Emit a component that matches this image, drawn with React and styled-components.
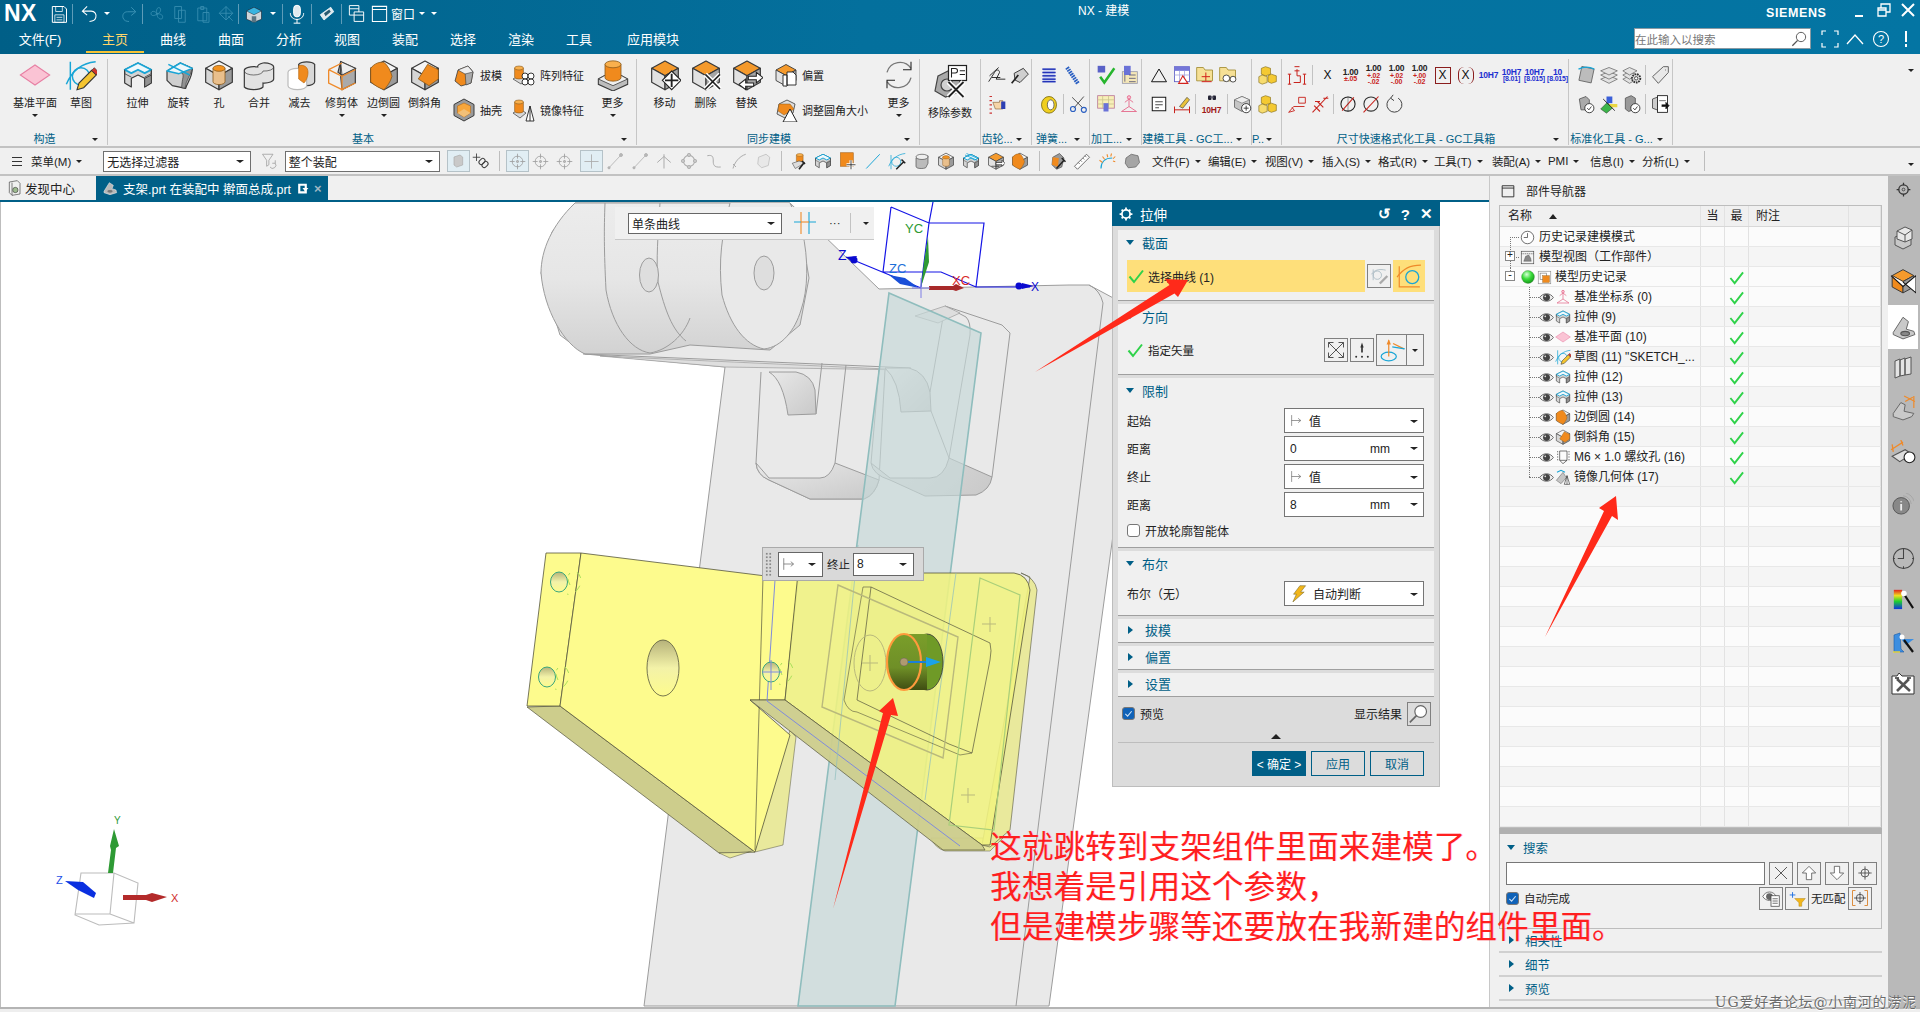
import styled, { createGlobalStyle } from "styled-components";

const FONT = `"Liberation Sans", "Noto Sans CJK SC", sans-serif`;
const BLUE = "#005f87";
const CY = "#19a5d6";
const LN = "#3a3a3a";

const Global = createGlobalStyle`
  html, body { margin: 0; padding: 0; background: #f0f0f0; }
  * { box-sizing: border-box; }
  body { font-family: ${FONT}; font-size: 12px; color: #222; }
`;

// ---------- icons ----------
const Svg = styled.svg`
  display: block;
  flex-shrink: 0;
  opacity: ${(p) => p.$o || 1};
`;

const Cube = ({ t = "#f5f5f5", l = "#d6d6d6", r = "#9b9b9b" }) => (
  <g stroke={LN} strokeWidth=".9" strokeLinejoin="round">
    <path d="M12 1.5 22 7 12 12.5 2 7Z" fill={t} />
    <path d="M2 7 12 12.5V23L2 17.5Z" fill={l} />
    <path d="M22 7 12 12.5V23L22 17.5Z" fill={r} />
  </g>
);
const OCube = () => <Cube t="#f59a2c" l="#e2e2e2" r="#a5a5a5" />;
const Cyl = ({ x = 12, y = 5, rx = 6, ry = 2.5, h = 8, f = "#f08a1d", t = "#f9b04d" }) => (
  <g stroke="#8a5a1c" strokeWidth=".6">
    <path d={`M${x - rx} ${y}V${y + h}A${rx} ${ry} 0 0 0 ${x + rx} ${y + h}V${y}Z`} fill={f} />
    <ellipse cx={x} cy={y} rx={rx} ry={ry} fill={t} />
  </g>
);
const BigX = ({ x = 17, y = 18, r = 5 }) => (
  <g>
    <path d={`M${x - r} ${y - r}L${x + r} ${y + r}M${x + r} ${y - r}L${x - r} ${y + r}`} stroke="#fff" strokeWidth="3.4" />
    <path d={`M${x - r} ${y - r}L${x + r} ${y + r}M${x + r} ${y - r}L${x - r} ${y + r}`} stroke="#222" strokeWidth="1.2" />
  </g>
);
const Lens = ({ x = 15, y = 9, r = 6.5, c = "#555" }) => (
  <g fill="none" stroke={c} strokeWidth="1.4">
    <circle cx={x} cy={y} r={r} fill="#fff" />
    <path d={`M${x - r * 0.72} ${y + r * 0.72}L${x - r - 6} ${y + r + 6}`} strokeWidth="2" />
  </g>
);
const Extr = () => (
  <g strokeLinejoin="round">
    <path d="M2 8 12 3 22 8V18L17 21V14.5L12 12 7 14.5V21L2 18Z" fill="#d4d4d4" stroke={LN} strokeWidth=".9" />
    <path d="M17 21V14.5L22 12V18Z" fill="#929292" stroke={LN} strokeWidth=".7" />
    <path d="M2 8 12 3 22 8 17 10.6 12 8 7 10.6Z" fill="#eef8fc" stroke={CY} strokeWidth="1.3" />
    <path d="M2 8V11L7 13.6M22 8V11L17 13.6" fill="none" stroke={LN} strokeWidth=".6" />
  </g>
);
const SketchGlyph = () => (
  <g fill="none">
    <path d="M4 23V2M1 19C5 9 13 3 23 2" stroke={CY} strokeWidth="1.1" />
    <circle cx="12" cy="13" r="6.5" stroke={CY} strokeWidth="1.1" />
    <path d="M9 23 10.5 18 20 8.5 23.5 12 14 21.5Z" fill="#f4c430" stroke="#333" strokeWidth=".8" />
    <path d="M20 8.5 22 6.5 25 9.8 23.5 12Z" fill="#d2342c" stroke="#333" strokeWidth=".5" />
  </g>
);

const ICONS = {
  plane: <path d="M1 12 12 4.5 23 12 12 19.5Z" fill="#fac3d4" stroke="#e77fa3" strokeWidth=".8" />,
  sketch: <SketchGlyph />,
  extrude: <Extr />,
  revolve: (
    <g strokeLinejoin="round">
      <path d="M3 9 13 3 22 7C22 14 18 18 17 22L7 20 3 16Z" fill="#cfcfcf" stroke={LN} strokeWidth=".9" />
      <path d="M13 3 22 7 C21 12 17 16 16.5 22 L14 21.5 C14 15 17 11 13 10 L3 9Z" fill="#929292" stroke={LN} strokeWidth=".5" />
      <path d="M3 9 13 3 22 7 12 11ZM4 4 20 12" fill="#edf7fb" stroke={CY} strokeWidth="1.1" />
    </g>
  ),
  hole: (
    <g>
      <Cube />
      <Cyl x={12} y={7} rx={4.5} ry={2.2} h={10} f="#e9bf8c" t="#f4931f" />
    </g>
  ),
  unite: (
    <g stroke={LN} strokeWidth=".9">
      <path d="M15 3a7 3 0 0 1 8 3v9a7 3 0 0 1-8 3v3a7.5 3 0 0 1-14 0V9a7 3 0 0 1 10-3 7 3 0 0 1 4-3Z" fill="#e2e2e2" />
      <path d="M1 9a7 3 0 0 0 14 0 7 3 0 0 0 8-3" fill="none" strokeWidth=".5" />
    </g>
  ),
  subtract: (
    <g strokeWidth=".9">
      <path d="M11 4a6.5 3 0 0 1 12 0v13a6 3 0 0 1-12 0Z" fill="#d8d8d8" stroke={LN} />
      <path d="M3 10a7 3 0 0 1 14 0v10a7 3 0 0 1-14 0Z" fill="#fff" stroke="#bbb" />
      <path d="M11 5c4-1 7 1 7 5s-2 7-3 8l-4-3Z" fill="#f08a1d" stroke="#b96a14" strokeWidth=".5" />
    </g>
  ),
  trim: (
    <g>
      <path d="M11 2 22 7 12 12 9 10ZM11 2V13l1 10 10-5V7" fill="#aaa" stroke={LN} strokeWidth=".9" />
      <path d="M11 2 22 7 12 12Z" fill="#eee" stroke={LN} strokeWidth=".6" />
      <path d="M2 8 12 3M2 8l10 5 10-5M2 8V18l10 5V13M12 23l10-5" fill="none" stroke="#ef8a2a" strokeWidth="1" />
    </g>
  ),
  blend: (
    <g>
      <Cube />
      <path d="M2 7C5 3 9 2 12 2.5 15 5 17 9 18 13 17 17 14 21 12 23 9 22 5 20 2 17Z" fill="#f08a1d" stroke="#8a5a1c" strokeWidth=".6" />
    </g>
  ),
  chamfer: (
    <g>
      <Cube />
      <path d="M22 8 14 4 7 15 15 20 22 15Z" fill="#f08a1d" stroke="#8a5a1c" strokeWidth=".6" />
    </g>
  ),
  draft: (
    <g>
      <path d="M6 7 16 3 21 9 19 20 9 23 3 18Z" fill="#f08a1d" stroke={LN} strokeWidth=".8" />
      <path d="M16 3 21 9 19 20 14 22 13 8Z" fill="#aaa" stroke={LN} strokeWidth=".6" />
      <path d="M6 7 16 3 21 9 13 11Z" fill="#eee" stroke={LN} strokeWidth=".6" />
    </g>
  ),
  shell: (
    <g>
      <path d="M12 1 22 6.5V17.5L12 23 2 17.5V6.5Z" fill="#9a9a9a" stroke={LN} />
      <path d="M12 5 18.5 8V15L12 19 5.5 15V8Z" fill="#f7a63b" stroke="#b96a14" strokeWidth=".6" />
      <path d="M5.5 15 12 11 18.5 15 12 19Z" fill="#f2c078" />
    </g>
  ),
  pattern: (
    <g>
      <path d="M1 16 8 12 16 16 9 21Z" fill="#d8d8d8" stroke={LN} strokeWidth=".7" />
      <Cyl x={7} y={5} rx={4.4} ry={2} h={9} />
      {[[13, 13], [19, 13], [13, 19], [19, 19]].map(([x, y]) => (
        <circle key={x + "" + y} cx={x} cy={y} r="3" fill="#fff" stroke="#222" strokeWidth=".9" />
      ))}
    </g>
  ),
  mirror: (
    <g>
      <path d="M1 15 8 11 14 15 8 20Z" fill="#d8d8d8" stroke={LN} strokeWidth=".7" />
      <Cyl x={7} y={4} rx={4.4} ry={2} h={9} />
      <path d="M14 23 18 8 22 23ZM18 8V23" fill="#fff" stroke="#222" strokeWidth=".9" />
    </g>
  ),
  more: (
    <g>
      <path d="M1 15 12 9 23 15V19L12 24 1 19Z" fill="#bdbdbd" stroke={LN} strokeWidth=".8" />
      <path d="M1 15 12 9 23 15 12 20Z" fill="#efefef" stroke={LN} strokeWidth=".6" />
      <Cyl x={12} y={4} rx={6} ry={2.6} h={10} />
    </g>
  ),
  move: (
    <g>
      <OCube />
      <path d="M17 9 24 16 17 23 10 16Z" fill="#fff" stroke="#222" strokeWidth=".8" />
      <path d="M17 11V21M12 16H22" stroke="#222" strokeWidth="1.4" />
    </g>
  ),
  del: (
    <g>
      <OCube />
      <BigX x={17} y={17} r={5.5} />
    </g>
  ),
  replace: (
    <g>
      <OCube />
      <path d="M13 13H19V10L24 14 19 18V15.5H13ZM17 18H11V15L6 19 11 23V20.5H17Z" fill="#fff" stroke="#222" strokeWidth=".8" />
    </g>
  ),
  offset: (
    <g>
      <OCube />
      <path d="M13 9h6l3 3v10h-9ZM9 12h4v11H9Z" fill="#fff" stroke="#222" strokeWidth=".9" />
    </g>
  ),
  resize: (
    <g>
      <path d="M5 6 13 2 21 6 19 15 11 20 3 16Z" fill="#ddd" stroke={LN} strokeWidth=".8" />
      <path d="M5 6 16 6 20 11 10 17 4 13Z" fill="#f08a1d" stroke="#8a5a1c" strokeWidth=".5" />
      <path d="M16 11 23 24H9Z" fill="#fff" stroke="#222" strokeWidth="1" />
    </g>
  ),
  refresh: (
    <g fill="none" stroke="#777" strokeWidth="1">
      <path d="M3 10A10 10 0 0 1 21 7M21 14A10 10 0 0 1 3 17" />
      <path d="M21 2V8H15M3 22V16H9" stroke="#222" strokeWidth=".8" />
    </g>
  ),
  removeParam: (
    <g>
      <path d="M4 8 14 3 19 9 17 19 9 22 2 18Z" fill="#a9a9a9" stroke="#444" strokeWidth=".8" />
      <circle cx="10" cy="14" r="4" fill="#d0d0d0" stroke="#444" strokeWidth=".8" />
      <rect x="11" y="1" width="12" height="10" fill="#fff" stroke="#222" strokeWidth=".8" />
      <path d="M13 9V3h2.5a1.5 1.5 0 0 1 0 3H13M18.5 4.5H22M18.5 7H22" stroke="#222" strokeWidth=".7" fill="none" />
      <BigX x={16} y={17} r={5} />
    </g>
  ),
  // --- title bar
  save: (
    <g fill="none" stroke="#fff" strokeWidth="1.2">
      <path d="M4 3H18L21 6V22H4Z" />
      <path d="M8 3V9H16V3M7 13H18V22H7ZM9 16H16M9 19H16" strokeWidth=".9" />
    </g>
  ),
  undo: <path d="M9 3 3 9 9 14M3 9H14C19 9 21 13 20 17 19 21 15 22 12 22" fill="none" stroke="#fff" strokeWidth="1.3" />,
  redo: <path d="M15 3 21 9 15 14M21 9H10C5 9 3 13 4 17 5 21 9 22 12 22" fill="none" stroke="#3a91b3" strokeWidth="1.3" />,
  fan: <path d="M12 12C10 6 13 2 16 4 18 7 16 11 12 12ZM12 12C17 11 21 14 19 18 16 20 12 17 12 12ZM12 12C8 15 4 15 4 11 5 7 10 8 12 12Z" fill="none" stroke="#3a91b3" strokeWidth="1.1" />,
  copy: <path d="M5 2H14V18H5ZM10 7H19V23H10Z" fill="none" stroke="#3a91b3" strokeWidth="1.1" />,
  paste: <path d="M5 4H17V21H5ZM9 2H13V6H9ZM12 10H20V23H12Z" fill="none" stroke="#3a91b3" strokeWidth="1.1" />,
  delDim: <path d="M12 2 21 11 12 20 3 11ZM12 2V20M3 11H21M15 15 21 21" fill="none" stroke="#3a91b3" strokeWidth="1.1" />,
  house: (
    <g>
      <path d="M12 3 22 8V19L12 23 2 19V8Z" fill="#cfd6da" stroke="#123" strokeWidth=".8" />
      <path d="M2 8 12 3 22 8 12 13Z" fill="#3ab4e0" stroke="#123" strokeWidth=".6" />
      <path d="M9 23V15H15V23" fill="#5c7683" />
    </g>
  ),
  mic: (
    <g fill="none" stroke="#fff" strokeWidth="1.2">
      <rect x="8" y="1.5" width="8" height="14" rx="4" fill="#dfe9ee" />
      <path d="M4 11C4 21 20 21 20 11M12 18V23M8 23H16" />
    </g>
  ),
  touch: (
    <g>
      <path d="M3 13 17 3 21 9 8 20Z" fill="#dfe9ee" stroke="#fff" strokeWidth="1" />
      <path d="M8 11 15 6 17 9 10 15Z" fill="#2a5a70" />
    </g>
  ),
  win1: (
    <g fill="none" stroke="#fff" strokeWidth="1.2">
      <path d="M3 2H15V14H3ZM3 6H15" />
      <path d="M9 10H21V22H9ZM9 14H21" fill={BLUE} />
    </g>
  ),
  win2: <path d="M3 3H21V22H3ZM3 7H21" fill="none" stroke="#fff" strokeWidth="1.3" />,
  // --- toolbar
  filterDim: <path d="M2 3H16L10.5 11V17L7.5 19V11ZM12 20A4 4 0 1 0 19 15M19 11V15H15" fill="none" stroke="#9a9a9a" strokeWidth="1" />,
  partDim: <path d="M6 6 15 3 19 6V18L10 21 6 18Z" fill="#c9c9c9" stroke="#aaa" />,
  link: (
    <g fill="none" stroke="#444" strokeWidth="1.4">
      <path d="M6 2V12M1 7H11" strokeWidth="1.2" />
      <rect x="9" y="10" width="9" height="6" rx="3" transform="rotate(-45 13 13)" />
      <rect x="13" y="14" width="9" height="6" rx="3" transform="rotate(-45 17 17)" />
    </g>
  ),
  target: (
    <g fill="none" stroke="#999" strokeWidth="1.1">
      <circle cx="12" cy="12" r="7.5" />
      <path d="M12 1V8M12 16V23M1 12H8M16 12H23" />
      <circle cx="12" cy="12" r="1.5" fill="#bbb" />
    </g>
  ),
  cross: <path d="M12 2V22M2 12H22" stroke="#aaa" strokeWidth="1.2" />,
  lineDim: (
    <g fill="#bbb" stroke="#aaa">
      <path d="M4 21 19 5" />
      <circle cx="20" cy="4" r="2" />
      <circle cx="4" cy="21" r="1.5" />
    </g>
  ),
  triDim: <path d="M12 3V22M3 14 12 6 21 14" fill="none" stroke="#aaa" strokeWidth="1.3" />,
  circDim: (
    <g fill="#c8c8c8" stroke="#aaa">
      <circle cx="12" cy="12" r="7.5" fill="none" strokeWidth="1.4" />
      <circle cx="12" cy="4" r="2.2" />
      <circle cx="12" cy="20" r="2.2" />
      <circle cx="4" cy="12" r="2.2" />
      <circle cx="20" cy="12" r="2.2" />
    </g>
  ),
  curveDim: <path d="M3 5C11 3 11 8 11 12 11 16 11 21 21 20" fill="none" stroke="#aaa" strokeWidth="1.3" />,
  arcDim: <path d="M4 22C6 14 12 6 21 3M4 16 8 20" fill="none" stroke="#aaa" strokeWidth="1.3" />,
  tagDim: <path d="M6 7 16 3 21 7 19 18 10 21 5 16Z" fill="#e8e8e8" stroke="#bbb" />,
  wrench: (
    <g>
      <Cyl x={13} y={4} rx={4.5} ry={2} h={8} />
      <path d="M3 15 12 12 20 14 14 18 7 22Z" fill="#ddd" stroke={LN} strokeWidth=".7" />
      <path d="M12 23 19 14M16 12 20 16" stroke="#222" strokeWidth="2.2" fill="none" />
    </g>
  ),
  extWire: <Extr />,
  addOrange: (
    <g>
      <rect x="2" y="1" width="17" height="18" fill="#f08a1d" stroke="#a95f12" strokeWidth=".8" />
      <path d="M16 11V23M10 17H22" stroke="#fff" strokeWidth="4" />
      <path d="M16 11V23M10 17H22" stroke="#222" strokeWidth="1.1" />
    </g>
  ),
  lineCyan: <path d="M3 22 21 3" stroke={CY} strokeWidth="1.3" />,
  skWrench: (
    <g fill="none">
      <path d="M4 23V4M1 19C5 9 13 3 23 2" stroke={CY} strokeWidth="1" />
      <circle cx="11" cy="13" r="6" stroke={CY} strokeWidth="1" />
      <path d="M11 23 21 13M18 10 23 15" stroke="#222" strokeWidth="2" />
    </g>
  ),
  cylGray: (
    <g stroke={LN} strokeWidth=".8">
      <path d="M4 8V19A7 3 0 0 0 18 19L20 15V5L4 8Z" fill="#bbb" />
      <ellipse cx="12" cy="6.5" rx="8" ry="3.5" fill="#eee" />
    </g>
  ),
  revWire: (
    <g>
      <Extr />
      <path d="M4 4 20 11M6 2 22 9" stroke={CY} strokeWidth="1.1" />
    </g>
  ),
  swap: (
    <g>
      <OCube />
      <path d="M12 14H20V11L24 15 20 19V17H12ZM6 19H16" stroke="#222" strokeWidth=".9" fill="#fff" />
    </g>
  ),
  wrenchCube: (
    <g>
      <path d="M5 7 14 2 20 8 17 20 10 23 4 17Z" fill="#999" stroke={LN} strokeWidth=".8" />
      <path d="M5 7 13 8 12 20 4 17Z" fill="#f08a1d" />
      <path d="M10 22 20 11M17 8 22 13" stroke="#222" strokeWidth="2" fill="none" />
    </g>
  ),
  ruler: (
    <g>
      <path d="M2 19 18 3 22 7 6 23Z" fill="#fff" stroke="#555" strokeWidth="1.1" />
      <path d="M7 14 9 16M10 11 12 13M13 8 15 10M16 5 18 7" stroke="#555" />
    </g>
  ),
  sun: (
    <g fill="none">
      <path d="M4 22C4 13 10 8 19 8" stroke={CY} strokeWidth="1.6" />
      <path d="M2 11 6 14M6 6 9 10M12 3 13 7M18 2 17 6M23 6 20 9M23 13 20 12" stroke="#ef8a2a" strokeWidth="1.4" />
    </g>
  ),
  rock: <path d="M4 8 11 3 20 5 22 14 17 20 7 21 3 15Z" fill="#a5a5a5" stroke="#666" strokeWidth="1" />,
  // --- gc toolbox, small
  pen1: <path d="M2 20 9 9C11 5 15 5 15 9L11 17H22M6 15H16M3 13 14 3" fill="none" stroke="#222" strokeWidth="1.1" />,
  inkwell: (
    <g>
      <path d="M5 10 16 4 22 11 12 21 6 18Z" fill="#cfcfcf" stroke="#222" strokeWidth="1" />
      <path d="M2 22 10 12" stroke="#222" strokeWidth="2" />
    </g>
  ),
  hand: (
    <g>
      <path d="M6 3H3M6 8H3M6 13H3M6 18H3M6 23H3" stroke="#c33" strokeWidth="1.4" />
      <path d="M7 10H15V8H19V18H10Z" fill="#f6d5a8" stroke="#7d5a32" strokeWidth=".7" />
      <rect x="17" y="9" width="5" height="9" fill="#2d3fb3" />
    </g>
  ),
  coil: (
    <g>
      <path d="M5 4H19V21H5Z" fill="#cfd6f2" />
      {[5, 9, 13, 17, 20].map((y) => (
        <path key={y} d={`M4 ${y}H20`} stroke="#2333b8" strokeWidth="1.8" />
      ))}
    </g>
  ),
  spring: <path d="M6 3 19 22" stroke="#2a5fc2" strokeWidth="5" strokeDasharray="2 1" />,
  washer: (
    <g>
      <ellipse cx="12" cy="13" rx="9" ry="10" fill="#f0cf1f" stroke="#7a6a10" />
      <ellipse cx="14" cy="13" rx="4" ry="6" fill="#fff" stroke="#555" />
    </g>
  ),
  scissor: (
    <g fill="none" stroke="#333" strokeWidth="1">
      <path d="M5 4 18 17M19 3 7 17" />
      <circle cx="6" cy="18" r="3" stroke="#2a5fc2" strokeWidth="1.4" />
      <circle cx="19" cy="19" r="3" stroke="#2a5fc2" strokeWidth="1.4" />
    </g>
  ),
  checkTool: (
    <g>
      <rect x="2" y="1" width="9" height="8" fill="#5a62c7" />
      <path d="M5 14 10 21 22 4" fill="none" stroke="#27b52e" strokeWidth="3" />
    </g>
  ),
  listTool: (
    <g>
      <rect x="4" y="8" width="18" height="14" fill="#f5e7b8" stroke="#99a" />
      <rect x="6" y="1" width="8" height="11" fill="#6a72d7" />
      <path d="M7 12V20M12 12H20M12 16H20M12 20H20" stroke="#557" />
    </g>
  ),
  gridTool: (
    <g>
      <rect x="2" y="2" width="20" height="15" fill="#f8efb8" stroke="#b79" />
      <path d="M2 7H22M2 12H22M8 2V17M15 2V17" stroke="#cbc48e" />
      <rect x="9" y="11" width="6" height="10" fill="#6a72d7" />
    </g>
  ),
  csys: (
    <g fill="none" stroke="#e56b8c" strokeWidth="1.1">
      <path d="M12 3V15L3 21M12 15 21 21M3 21H21M7 10 12 6M17 10 12 6" />
      <circle cx="12" cy="4" r="2" fill="#fac3d4" />
    </g>
  ),
  tri: <path d="M12 4 22 21H2Z" fill="none" stroke="#111" strokeWidth="1.3" />,
  calRed: (
    <g>
      <rect x="3" y="2" width="18" height="18" fill="#fff" stroke="#5a5cc5" />
      <rect x="3" y="2" width="18" height="5" fill="#7476d8" />
      <path d="M3 12H21M9 7V20M15 7V20" stroke="#a9a9e0" />
      <path d="M13 13 19 22H8Z" fill="#fff" stroke="#d2231d" strokeWidth="1.3" />
    </g>
  ),
  folderRed: (
    <g>
      <path d="M2 3H10L12 6H21V19H2Z" fill="#f6e095" stroke="#a08a30" />
      <path d="M13 9V19M8 14H18M8 20H20" stroke="#d2231d" strokeWidth="1.2" />
    </g>
  ),
  folderChain: (
    <g>
      <path d="M2 3H10L12 6H21V19H2Z" fill="#f6e095" stroke="#a08a30" />
      <circle cx="10" cy="16" r="4" fill="#fff" stroke="#333" />
      <circle cx="18" cy="17" r="3.5" fill="#fff" stroke="#333" />
    </g>
  ),
  note: (
    <g fill="#fff" stroke="#111" strokeWidth="1.3">
      <rect x="3" y="3" width="18" height="18" />
      <path d="M7 9H17M7 13H17M7 17H12" strokeWidth="1" />
    </g>
  ),
  brushDim: (
    <g>
      <path d="M3 19H21M3 15V23M21 15V23" stroke="#c8231d" strokeWidth="1.2" />
      <path d="M9 15 18 4 21 7 13 17Z" fill="#e9c23b" stroke="#444" strokeWidth=".8" />
    </g>
  ),
  binoc: (
    <g fill="#223">
      <rect x="4" y="3" width="7" height="9" rx="2" />
      <rect x="13" y="3" width="7" height="9" rx="2" />
      <rect x="9" y="5" width="6" height="3" fill="#667" />
    </g>
  ),
  boxPlus: (
    <g>
      <path d="M3 7 12 3 21 7V16L12 21 3 16Z" fill="#c5c5c5" stroke="#555" strokeWidth=".9" />
      <path d="M3 7 12 11 21 7 12 3Z" fill="#eee" stroke="#555" strokeWidth=".6" />
      <circle cx="17" cy="17" r="5.5" fill="#fff" stroke="#222" />
      <path d="M17 14V20M14 17H20" stroke="#222" />
    </g>
  ),
  goldBoxes: (
    <g fill="#f4c932" stroke="#7a6410" strokeWidth=".7">
      <path d="M9 2 15 4V11L9 13 4 11V4Z" />
      <path d="M5 12 11 14V21L5 23 1 21V14Z" fill="#f7dc6f" />
      <path d="M16 11 22 13V20L16 22 12 20V13Z" />
    </g>
  ),
  bracket: (
    <g fill="none" stroke="#c8231d" strokeWidth="1.2">
      <path d="M3 11V23M1 11H5M1 23H5M21 11V23M19 11H23M19 23H23M8 21H16V13H12V5" />
      <path d="M9 2H15M9 7H15" />
    </g>
  ),
  pinRed: <path d="M2 22 8 15H21M2 22 9 20 6 16M14 4H22V11H14Z" fill="none" stroke="#c8231d" strokeWidth="1.1" />,
  slantRed: <path d="M3 22 21 3M5 14 12 21M9 9 16 16M6 9H12M16 5H22" fill="none" stroke="#c8231d" strokeWidth="1.3" />,
  dia1: (
    <g fill="none" stroke="#222" strokeWidth="1.3">
      <circle cx="12" cy="12" r="8.5" />
      <path d="M5 20 19 4" stroke="#c8231d" />
      <path d="M12 3 12 21" strokeWidth=".5" />
    </g>
  ),
  dia2: (
    <g fill="none" strokeWidth="1.3">
      <circle cx="12" cy="12" r="8.5" stroke="#333" />
      <path d="M3 22 21 3" stroke="#c8231d" />
    </g>
  ),
  rotate: <path d="M8 5A9 9 0 1 0 17 5M11 1 8 5 12 8" fill="none" stroke="#444" strokeWidth="1.2" />,
  bezier: (
    <g>
      <rect x="5" y="3" width="15" height="17" fill="#bcbcbc" stroke="#666" transform="rotate(12 12 12)" />
      <path d="M3 5C9 2 16 2 22 5" fill="none" stroke={CY} strokeWidth="1.6" />
    </g>
  ),
  layers: (
    <g fill="#e2e2e2" stroke="#666" strokeWidth=".9">
      <path d="M12 13 22 17 12 22 2 17Z" />
      <path d="M12 8 22 12 12 17 2 12Z" />
      <path d="M12 3 22 7 12 12 2 7Z" />
    </g>
  ),
  layersGear: (
    <g>
      <g fill="#e2e2e2" stroke="#666" strokeWidth=".9">
        <path d="M9 13 18 17 9 22 1 17Z" />
        <path d="M9 8 18 12 9 17 1 12Z" />
        <path d="M9 3 18 7 9 12 1 7Z" />
      </g>
      <circle cx="17" cy="16" r="5" fill="#ddd" stroke="#333" strokeWidth="2.2" strokeDasharray="2 1" />
      <circle cx="17" cy="16" r="2" fill="#fff" stroke="#333" />
    </g>
  ),
  tag: <path d="M3 14 16 2H22V9L10 22ZM18 6H19" fill="#e8e8e8" stroke="#666" strokeWidth="1.2" />,
  okGray: (
    <g>
      <path d="M4 6 12 3 16 7V19H6Z" fill="#aaa" stroke="#555" />
      <circle cx="16" cy="17" r="5.5" fill="#fff" stroke="#222" />
      <path d="M13.5 17 15.5 19 18.5 15" fill="none" stroke="#222" />
    </g>
  ),
  okColor: (
    <g>
      <path d="M2 18 10 10 16 17 9 23Z" fill="#3bb54a" stroke="#333" strokeWidth=".6" />
      <path d="M9 3H16V11H9Z" fill="#3a5fd8" />
      <path d="M12 12H22V16H14Z" fill="#e9d742" />
      <path d="M5 6 19 20" stroke="#222" strokeWidth="1.1" />
    </g>
  ),
  okBox: (
    <g>
      <path d="M4 5 11 2 16 5V18L8 21 4 18Z" fill="#999" stroke="#555" />
      <circle cx="16" cy="17" r="5.5" fill="#fff" stroke="#222" />
      <path d="M13.5 17 15.5 19 18.5 15" fill="none" stroke="#222" />
    </g>
  ),
  docArrow: (
    <g>
      <path d="M3 6 11 3V20L3 17Z" fill="#ccc" stroke="#444" />
      <rect x="9" y="2" width="12" height="20" fill="#fff" stroke="#111" />
      <path d="M11 8H19M14 13H19V10L23 14 19 18V15H14" fill="#111" stroke="#111" strokeWidth=".7" />
    </g>
  ),
  // --- tree
  clock: (
    <g fill="none" stroke="#333" strokeWidth="1.1">
      <circle cx="12" cy="12" r="10" fill="#fff" />
      <path d="M12 5V12H6" />
    </g>
  ),
  modelView: (
    <g>
      <rect x="2" y="2" width="20" height="20" fill="#f4f4f4" stroke="#444" />
      <path d="M2 6H22" stroke="#444" strokeDasharray="2 1" />
      <path d="M6 18 9 10 14 8 17 13 18 18Z" fill="#888" stroke="#444" strokeWidth=".6" />
    </g>
  ),
  history: (
    <g>
      <rect x="2" y="2" width="20" height="20" fill="#fff" stroke="#888" />
      <rect x="5" y="5" width="10" height="10" fill="#fff" stroke="#777" />
      <rect x="9" y="9" width="11" height="11" fill="#f08a1d" stroke="#8a5a1c" strokeWidth=".6" />
    </g>
  ),
  ball: (
    <g>
      <defs>
        <radialGradient id="ballg" cx=".4" cy=".3" r=".8">
          <stop offset="0" stopColor="#d8ffd8" />
          <stop offset=".45" stopColor="#3bdc3b" />
          <stop offset="1" stopColor="#0e8a12" />
        </radialGradient>
      </defs>
      <circle cx="12" cy="12" r="11" fill="url(#ballg)" stroke="#2a6a2a" strokeWidth=".5" />
    </g>
  ),
  eye: (
    <g>
      <path d="M1 12C6 4 18 4 23 12 18 20 6 20 1 12Z" fill="#ececec" stroke="#555" strokeWidth="1.3" />
      <circle cx="12" cy="12" r="5.5" fill="#444" />
      <circle cx="10" cy="10" r="1.4" fill="#ddd" />
    </g>
  ),
  thread: (
    <g fill="none" stroke="#333" strokeWidth="1">
      <path d="M7 3H18V17L12 22 7 17ZM7 17H18" />
      <path d="M4 3V19M21 3V19" strokeDasharray="2 2" />
    </g>
  ),
  mirrorGeo: (
    <g>
      <path d="M2 17 12 5 17 13 9 22Z" fill="#c5c5c5" stroke="#555" strokeWidth=".7" />
      <path d="M3 5 9 2 15 5" fill="none" stroke={CY} strokeWidth="1.6" />
      <path d="M14 23 18 10 22 23ZM18 10V23" fill="#fff" stroke="#222" strokeWidth=".9" />
    </g>
  ),
  // --- rail
  gear: (
    <g fill="none" stroke="#333">
      <circle cx="12" cy="12" r="7.5" strokeWidth="2" />
      <circle cx="12" cy="12" r="2.2" strokeWidth="1.2" />
      <path d="M12 1V5M12 19V23M1 12H5M19 12H23" strokeWidth="2" />
    </g>
  ),
  gearW: (
    <g fill="none" stroke="#fff">
      <circle cx="12" cy="12" r="7" strokeWidth="3" />
      <path d="M12 1V5M12 19V23M1 12H5M19 12H23M4.5 4.5 7 7M17 17 19.5 19.5M19.5 4.5 17 7M7 17 4.5 19.5" strokeWidth="3" />
    </g>
  ),
  boxes: (
    <g fill="#e8e8e8" stroke="#555" strokeWidth="1">
      <path d="M4 11 12 8 20 11V19L12 23 4 19Z" fill="#c8c8c8" />
      <path d="M6 5 14 1 21 4V13L14 16 6 13Z" />
      <path d="M6 5 14 9 21 4M14 9V16" fill="none" />
    </g>
  ),
  cubeBow: (
    <g>
      <Cube t="#f59a2c" l="#f08a1d" r="#9a9a9a" />
      <path d="M12 12 24 22V6L12 16 1 6" fill="#fff" stroke="#111" strokeWidth="1" transform="translate(0 1)" />
    </g>
  ),
  part: (
    <g>
      <path d="M3 17 12 3 17 7 15 14 22 16 23 19 12 23 3 19Z" fill="#c9c9c9" stroke="#666" strokeWidth=".9" />
      <ellipse cx="14" cy="18" rx="4" ry="2" fill="#888" stroke="#555" />
    </g>
  ),
  books: (
    <g fill="#e4e4e4" stroke="#555" strokeWidth="1">
      <path d="M4 6 9 4V21L4 23ZM9 5 14 3V20L9 21ZM14 4 20 2V19L14 20Z" />
    </g>
  ),
  partDim2: (
    <g>
      <path d="M3 17 10 7 14 9 13 15 22 17 20 20 12 23 3 20Z" fill="#c9c9c9" stroke="#666" strokeWidth=".9" />
      <path d="M14 6 21 2M13 1 23 6M22 1V12" stroke="#ef8a2a" strokeWidth="1.1" fill="none" />
    </g>
  ),
  measure: (
    <g>
      <path d="M2 15 14 9 20 13 9 20Z" fill="#ddd" stroke="#555" />
      <path d="M1 9 12 2M2 4 3 11M10 0 12 5" stroke="#ef8a2a" strokeWidth="1.2" />
      <circle cx="18" cy="16" r="5" fill="#fff" stroke="#222" />
    </g>
  ),
  info: (
    <g>
      <circle cx="10" cy="14" r="9" fill="#888" stroke="#555" />
      <path d="M10 9V10M10 12V19" stroke="#eee" strokeWidth="2" />
      <path d="M12 3A10 10 0 0 1 21 12M15 0A13 13 0 0 1 24 9" fill="none" stroke="#a5a5a5" />
    </g>
  ),
  railClock: (
    <g fill="none" stroke="#444" strokeWidth="1.1">
      <circle cx="12" cy="12" r="10.5" />
      <path d="M12 1V12H6M12 20V23M1 12H3M21 12H23" />
    </g>
  ),
  colorWand: (
    <g>
      <defs>
        <linearGradient id="rainb" x1="0" y1="0" x2="0" y2="1">
          <stop offset="0" stopColor="#e02020" />
          <stop offset=".3" stopColor="#f0e020" />
          <stop offset=".6" stopColor="#20d030" />
          <stop offset="1" stopColor="#1030e0" />
        </linearGradient>
      </defs>
      <rect x="2" y="2" width="9" height="21" fill="url(#rainb)" />
      <path d="M14 8 23 22" stroke="#111" strokeWidth="2.2" />
      <circle cx="13" cy="6" r="3" fill="#fff" />
    </g>
  ),
  wandBlue: (
    <g>
      <path d="M3 5 9 3 10 19 13 22H3Z" fill="#3d8ee0" stroke="#1a5aa8" strokeWidth=".6" />
      <path d="M10 9H23L15 15Z" fill="#3d8ee0" />
      <path d="M2 22H9" stroke="#e9d742" strokeWidth="1.5" />
      <path d="M13 10 22 22" stroke="#111" strokeWidth="2.2" />
      <circle cx="11" cy="7" r="2.5" fill="#fff" />
    </g>
  ),
  tools: (
    <g>
      <path d="M1 5H6L8 2 11 5H23V23H1Z" fill="#fff" stroke="#333" />
      <path d="M6 8 19 20M18 8 6 20" stroke="#555" strokeWidth="2.6" />
      <path d="M4 7 8 7M16 7H20" stroke="#333" strokeWidth="1.4" />
    </g>
  ),
  // --- dialog
  sketchPen: (
    <g>
      <path d="M3 10C6 5 12 3 20 5M5 4V17" fill="none" stroke="#a8b9c2" strokeWidth="1" />
      <circle cx="10" cy="11" r="5" fill="none" stroke="#a8b9c2" strokeWidth="1" />
      <path d="M12 20 21 11 23 13 14 22Z" fill="#aaa" />
    </g>
  ),
  curveOrange: (
    <g fill="none">
      <path d="M3 3V22H22" stroke="#ef8a2a" strokeWidth="1.1" />
      <path d="M1 13C7 5 13 2 23 2" stroke="#ef8a2a" strokeWidth="1.1" />
      <circle cx="15" cy="13" r="6" stroke={CY} strokeWidth="1.2" />
    </g>
  ),
  crossArrows: <path d="M3 3 21 21M21 3 3 21M3 3V9M3 3H9M21 21V15M21 21H15M21 3H15M21 3V9M3 21H9M3 21V15" fill="none" stroke="#444" strokeWidth="1.1" />,
  dotArrow: (
    <g fill="#333">
      <path d="M12 3 14 9H13V15H11V9H10Z" />
      <circle cx="5" cy="20" r="1.2" />
      <circle cx="12" cy="20" r="1.2" />
      <circle cx="19" cy="20" r="1.2" />
    </g>
  ),
  vector: (
    <g fill="none">
      <ellipse cx="9" cy="18" rx="7" ry="4" stroke={CY} strokeWidth="1.1" />
      <path d="M9 18V3" stroke="#ef8a2a" strokeWidth="1.1" />
      <path d="M9 2 11 7H7Z" fill="#ef8a2a" />
      <path d="M13 6 23 11" stroke="#ef8a2a" strokeWidth="1.2" />
      <path d="M13 13 23 7" stroke={CY} strokeWidth="1.1" transform="rotate(40 18 10)" />
    </g>
  ),
  value: <path d="M3 2V22M3 12H19M15 8 20 12 15 16" fill="none" stroke="#444" strokeWidth="1" />,
  bolt: <path d="M14 1H22L15 10H20L4 24 9 13H5Z" fill="#f2b61a" stroke="#7a6a2a" strokeWidth=".8" />,
  search: <Lens x={14} y={9} r={7} c="#666" />,
  selCross: (
    <g fill="none" strokeWidth="1.1">
      <path d="M8 1V23" stroke="#ef8a2a" />
      <path d="M16 1V23" stroke={CY} />
      <path d="M1 11H8M16 11H23" stroke={CY} />
      <path d="M8 11H16" stroke="#ef8a2a" />
    </g>
  ),
  // --- search pane
  bigX: <path d="M3 3 21 21M21 3 3 21" stroke="#222" strokeWidth="1.1" />,
  up: <path d="M12 2 22 12H16V22H8V12H2Z" fill="#fff" stroke="#444" strokeWidth="1.1" />,
  down: <path d="M12 22 22 12H16V2H8V12H2Z" fill="#fff" stroke="#444" strokeWidth="1.1" />,
  aim: (
    <g fill="none" stroke="#333" strokeWidth="1.1">
      <circle cx="12" cy="12" r="6" />
      <path d="M12 2V22M2 12H22" />
    </g>
  ),
  eyeDoc: (
    <g>
      <path d="M1 10C5 2 15 2 19 10 15 17 5 17 1 10Z" fill="#fff" stroke="#666" strokeWidth="1.2" />
      <circle cx="10" cy="10" r="4.5" fill="#666" />
      <rect x="12" y="9" width="11" height="14" fill="#fff" stroke="#444" />
      <path d="M14 13H21M14 16H21M14 19H21" stroke="#444" />
    </g>
  ),
  addFilter: (
    <g>
      <path d="M5 3V11M1 7H9" stroke="#1c6ee0" strokeWidth="1.3" />
      <path d="M8 12H23L18 18V23H14V18Z" fill="#f2b61a" stroke="#a97f10" strokeWidth=".6" />
    </g>
  ),
  aimBr: (
    <g fill="none">
      <circle cx="12" cy="12" r="5" stroke="#333" />
      <path d="M12 4V20M4 12H20" stroke="#333" />
      <path d="M6 2H2V22H6M18 2H22V22H18" stroke="#d9822b" strokeWidth="1.2" />
    </g>
  ),
  winSq: <path d="M2 3H22V22H2ZM2 7H22" fill="none" stroke="#222" strokeWidth="1.5" />,
  tabPart: (
    <g>
      <path d="M3 17 11 4 17 8 15 13 21 15 22 19 12 22 3 19Z" fill="#b9b9b9" stroke="#eee" strokeWidth=".8" />
      <ellipse cx="12" cy="17" rx="4" ry="2" fill="#777" />
    </g>
  ),
  findCenter: (
    <g fill="none" stroke="#444" strokeWidth="1">
      <path d="M5 3 17 1 21 5V21L9 23 5 19Z" />
      <path d="M9 4V23" />
      <circle cx="14" cy="15" r="4" fill="#9dbb8e" />
    </g>
  ),
  pageArrow: (
    <g fill="#fff">
      <path d="M4 3H20V21H4ZM8 7V17H16V7Z" fillRule="evenodd" />
      <path d="M12 11 23 11 17 18Z" fill="#fff" />
    </g>
  ),
};

const Icon = ({ n, s = 24, o }) => (
  <Svg width={s} height={s} viewBox="0 0 24 24" $o={o}>
    {ICONS[n]}
  </Svg>
);

// ---------- shared bits ----------
const Caret = styled.span`
  display: inline-block;
  flex-shrink: 0;
  width: 0;
  height: 0;
  border-left: ${(p) => p.$s || 3}px solid transparent;
  border-right: ${(p) => p.$s || 3}px solid transparent;
  border-top: ${(p) => (p.$s ? p.$s - 1 : 3)}px solid ${(p) => p.$c || "#222"};
  margin-left: ${(p) => p.$ml || 0}px;
`;

// ---------- title bar ----------
const Root = styled.div`
  position: relative;
  width: 1920px;
  height: 1012px;
  overflow: hidden;
  display: flex;
  flex-direction: column;
  background: #f0f0f0;
`;
const Head = styled.header`
  height: 54px;
  display: flex;
  flex-direction: column;
  background: linear-gradient(90deg, #005f87 0%, #04709d 45%, #0475a3 100%);
  color: #fff;
`;
const TitleRow = styled.div`
  height: 27px;
  display: flex;
  align-items: center;
  position: relative;
`;
const Logo = styled.div`
  width: 38px;
  margin-left: 4px;
  font: bold 23px/27px "Liberation Sans", sans-serif;
  letter-spacing: 0.5px;
`;
const QuickBtn = styled.div`
  width: ${(p) => p.$w || 24}px;
  margin-left: ${(p) => p.$ml || 0}px;
  display: flex;
  align-items: center;
  justify-content: center;
`;
const QuickSep = styled.i`
  width: 1px;
  height: 20px;
  background: #5e9cb8;
  margin-left: ${(p) => p.$ml || 4}px;
  margin-right: ${(p) => p.$mr || 4}px;
`;
const WinText = styled.span`
  font-size: 12px;
  margin-left: 0;
`;
const AppTitle = styled.div`
  position: absolute;
  left: 1078px;
  top: 3px;
  font-size: 12px;
  line-height: 16px;
`;
const Siemens = styled.div`
  position: absolute;
  left: 1766px;
  top: 5px;
  font: bold 12.5px/16px "Liberation Sans", sans-serif;
  letter-spacing: 0.6px;
`;
const WinCtrls = styled.div`
  position: absolute;
  right: 4px;
  top: 2px;
  display: flex;
  gap: 8px;
`;
const MenuRow = styled.nav`
  height: 27px;
  display: flex;
  align-items: stretch;
  padding-left: 11px;
`;
const MenuTab = styled.div`
  width: ${(p) => p.$w || 58}px;
  margin-right: ${(p) => p.$mr || 0}px;
  display: flex;
  align-items: center;
  justify-content: center;
  font-size: 13px;
  padding-bottom: 2px;
  color: ${(p) => (p.$on ? "#ffd66b" : "#fff")};
  border-bottom: 2px solid ${(p) => (p.$on ? "#f7c233" : "transparent")};
  height: 26px;
`;
const MenuRight = styled.div`
  margin-left: auto;
  display: flex;
  align-items: center;
  padding-right: 1px;
  height: 23px;
`;
const TopSearch = styled.div`
  width: 177px;
  height: 21px;
  background: #fff;
  border: 1px solid #8a9aa3;
  display: flex;
  align-items: center;
  justify-content: space-between;
  padding-right: 3px;
  font-size: 11.5px;
  color: #777;
  margin-right: 6px;
`;
const TopBtn = styled.div`
  width: 25.5px;
  display: flex;
  justify-content: center;
`;

// ---------- ribbon ----------
const Ribbon = styled.section`
  height: 94px;
  display: flex;
  padding-top: 5px;
  background: #f0f0f0;
  border-bottom: 2px solid #c2c2c2;
  position: relative;
`;
const Group = styled.div`
  width: ${(p) => p.$w}px;
  height: 86px;
  display: flex;
  flex-direction: column;
  border-right: ${(p) => (p.$end ? "none" : "1px solid #c6c6c6")};
  position: relative;
`;
const GroupBody = styled.div`
  height: 73px;
  display: flex;
  padding-left: ${(p) => p.$pl || 0}px;
  padding-top: ${(p) => p.$pt || 0}px;
  flex-direction: ${(p) => (p.$col ? "column" : "row")};
  gap: ${(p) => p.$gap || 0}px;
`;
const GroupLabel = styled.div`
  height: 13px;
  padding-right: 18px;
  text-align: center;
  font-size: 11px;
  line-height: 14px;
  color: ${BLUE};
  white-space: nowrap;
  overflow: hidden;
  position: relative;
`;
const GroupCaret = styled.div`
  position: absolute;
  right: 9px;
  bottom: 4px;
  line-height: 0;
`;
const LargeTool = styled.div`
  width: ${(p) => p.$w || 41}px;
  display: flex;
  flex-direction: column;
  align-items: center;
  padding-top: ${(p) => p.$pt || 0}px;
  margin-left: ${(p) => p.$ml || 0}px;
`;
const LargeLabel = styled.div`
  margin-top: ${(p) => p.$mt || 5}px;
  font-size: 11px;
  line-height: 14px;
  height: 14px;
  white-space: nowrap;
  color: #222;
`;
const ToolCaret = styled.div`
  margin-top: 3px;
  line-height: 0;
`;
const SmallCol = styled.div`
  width: ${(p) => p.$w}px;
  margin-left: ${(p) => p.$ml || 0}px;
  padding-top: 4px;
  display: flex;
  flex-direction: column;
  gap: 11px;
`;
const SmallTool = styled.div`
  display: flex;
  align-items: center;
  gap: 4px;
  font-size: 11px;
  height: 24px;
  white-space: nowrap;
`;
const IconRow = styled.div`
  display: flex;
  align-items: center;
  height: 22px;
`;
const Cell = styled.div`
  width: ${(p) => p.$w || 23}px;
  height: 22px;
  display: flex;
  align-items: center;
  justify-content: center;
  flex-shrink: 0;
`;
const RowSep = styled.i`
  width: 1px;
  height: 20px;
  background: #c2c2c2;
  margin: 0 ${(p) => p.$m ?? 2}px;
  flex-shrink: 0;
`;
const DimText = styled.div`
  display: flex;
  flex-direction: column;
  align-items: center;
  font: bold 8.5px/8.5px "Liberation Sans", sans-serif;
  letter-spacing: -0.2px;
  color: ${(p) => p.$c || "#222"};
`;
const DimSub = styled.span`
  font-size: 7px;
  line-height: 6.5px;
  color: ${(p) => p.$c || "#c8231d"};
`;
const XBox = styled.div`
  width: ${(p) => p.$w || 14}px;
  height: 17px;
  display: flex;
  align-items: center;
  justify-content: center;
  border: ${(p) => (p.$box ? "1.5px solid #8a1d1d" : "none")};
  border-left: ${(p) => (p.$paren ? "1.5px solid #8a1d1d" : "")};
  border-right: ${(p) => (p.$paren ? "1.5px solid #8a1d1d" : "")};
  border-radius: ${(p) => (p.$paren ? "6px" : "0")};
  font-size: 12px;
  color: #111;
`;

// ---------- select bar ----------
const ToolBar = styled.section`
  height: 28px;
  display: flex;
  align-items: center;
  background: #f0f0f0;
  border-bottom: 2px solid #c2c2c2;
  position: relative;
`;
const Burger = styled.div`
  width: 10px;
  height: 9px;
  margin-left: 12px;
  border-top: 1px solid #333;
  border-bottom: 1px solid #333;
  position: relative;
  &::after {
    content: "";
    position: absolute;
    left: 0;
    right: 0;
    top: 3px;
    height: 1px;
    background: #333;
  }
`;
const BarText = styled.span`
  font-size: 11.5px;
  white-space: nowrap;
  margin-left: ${(p) => p.$ml || 0}px;
`;
const BarSelect = styled.div`
  width: ${(p) => p.$w}px;
  height: 21px;
  margin-left: ${(p) => p.$ml || 0}px;
  background: #fff;
  border: 1px solid #6f6f6f;
  display: flex;
  align-items: center;
  justify-content: space-between;
  padding: 0 6px 0 3px;
  font-size: 12px;
`;
const BarBtn = styled.div`
  width: ${(p) => p.$w || 24.5}px;
  height: 22px;
  margin-left: ${(p) => p.$ml || 0}px;
  display: flex;
  align-items: center;
  justify-content: center;
  flex-shrink: 0;
  background: ${(p) => (p.$on ? "#e1eef4" : "transparent")};
  border: ${(p) => (p.$on ? "1px solid #b5c2c8" : "none")};
`;
const BarSep = styled.i`
  width: 1px;
  height: 20px;
  background: #bdbdbd;
  margin: 0 ${(p) => p.$m || 8}px;
  flex-shrink: 0;
`;
const BarMenu = styled.div`
  display: flex;
  align-items: center;
  margin-left: ${(p) => p.$ml || 0}px;
  width: ${(p) => p.$w || 56}px;
  font-size: 11.5px;
  white-space: nowrap;
`;
const FarCaret = styled.div`
  position: absolute;
  right: 6px;
  top: 14px;
  line-height: 0;
`;

// ---------- workspace ----------
const Work = styled.div`
  flex: 1;
  display: flex;
  min-height: 0;
`;
const Left = styled.main`
  width: 1490px;
  display: flex;
  flex-direction: column;
  border-right: 1px solid #c8c8c8;
`;
const Tabs = styled.div`
  height: 26px;
  display: flex;
  background: #f0f0f0;
  border-bottom: 2px solid ${BLUE};
`;
const DocTab = styled.div`
  width: ${(p) => p.$w}px;
  display: flex;
  align-items: center;
  gap: ${(p) => p.$gap || 3}px;
  padding-left: ${(p) => p.$pl || 0}px;
  font-size: 12.5px;
  white-space: nowrap;
  color: ${(p) => (p.$on ? "#fff" : "#222")};
  background: ${(p) => (p.$on ? BLUE : "transparent")};
`;
const TabClose = styled.span`
  font-size: 13px;
  color: #9fb7c3;
  font-weight: bold;
`;
const Viewport = styled.div`
  flex: 1;
  position: relative;
  background: #fff;
  border-left: 1px solid #bdbdbd;
  overflow: hidden;
`;
const Stage = styled.svg`
  display: block;
  margin-left: -1px;
`;
const StatusLine = styled.div`
  height: 5px;
  background: #eee;
  border-top: 2px solid #b4b4b4;
`;

// ---------- floating bars in the viewport ----------
const SelBar = styled.div`
  position: absolute;
  left: 614px;
  top: 5px;
  width: 259px;
  height: 33px;
  background: #f0f0f0;
  border-bottom: 1px solid #c8c8c8;
  display: flex;
  align-items: center;
  padding-left: 13px;
`;
const MiniInput = styled.div`
  position: absolute;
  left: 761px;
  top: 345px;
  width: 162px;
  height: 34px;
  background: #d9d9d9;
  border: 1px solid #aaa;
  display: flex;
  align-items: center;
`;
const Grip = styled.i`
  width: 7px;
  height: 24px;
  margin: 0 6px 0 2px;
  background-image: radial-gradient(#888 1px, transparent 1.2px);
  background-size: 3.5px 3.5px;
`;
const MiniField = styled.div`
  width: ${(p) => p.$w}px;
  height: ${(p) => p.$h || 24}px;
  background: #fff;
  border: 1px solid #666;
  display: flex;
  align-items: center;
  justify-content: space-between;
  padding: 0 6px 0 3px;
  font-size: 12px;
`;

// ---------- extrude dialog ----------
const Dialog = styled.aside`
  position: absolute;
  left: 1111px;
  top: 0;
  width: 328px;
  height: 585px;
  background: #dcdcdc;
  border: 1px solid #bdbdbd;
  border-top: none;
  display: flex;
  flex-direction: column;
  z-index: 2;
`;
const DlgHead = styled.div`
  height: 24px;
  margin: 0 -1px;
  background: ${BLUE};
  color: #fff;
  display: flex;
  align-items: center;
  padding: 0 7px 0 7px;
  font-size: 13.5px;
  gap: 7px;
`;
const DlgTools = styled.div`
  margin-left: auto;
  display: flex;
  align-items: center;
  gap: 10px;
  font-weight: bold;
  font-size: 15px;
`;
const DlgBody = styled.div`
  padding: 4px 5px 0;
  display: flex;
  flex-direction: column;
  gap: 3px;
`;
const Sect = styled.div`
  height: ${(p) => p.$h}px;
  background: #f0f0f0;
  border-bottom: 1px solid #9f9f9f;
`;
const SectHead = styled.div`
  height: ${(p) => (p.$small ? 23 : 26)}px;
  display: flex;
  align-items: center;
  gap: ${(p) => (p.$open ? 8 : 12)}px;
  padding-left: ${(p) => (p.$open ? 8 : 10)}px;
  padding-bottom: 2px;
  color: ${BLUE};
  font-size: 13px;
`;
const OpenTri = styled.i`
  width: 0;
  height: 0;
  border-left: 4.5px solid transparent;
  border-right: 4.5px solid transparent;
  border-top: 5px solid ${BLUE};
`;
const ClosedTri = styled.i`
  width: 0;
  height: 0;
  border-top: 4.5px solid transparent;
  border-bottom: 4.5px solid transparent;
  border-left: 5px solid ${BLUE};
`;
const SelectRow = styled.div`
  display: flex;
  align-items: center;
  padding: 4px 9px 0;
  gap: 2px;
`;
const YellowBar = styled.div`
  width: 238px;
  height: 32px;
  background: #fedf7a;
  display: flex;
  align-items: center;
  gap: 4px;
  padding-left: 1px;
  font-size: 12px;
`;
const Square = styled.div`
  width: ${(p) => p.$w || 24}px;
  height: ${(p) => p.$h || 24}px;
  flex-shrink: 0;
  display: flex;
  align-items: center;
  justify-content: center;
  background: ${(p) => p.$bg || "transparent"};
  border: ${(p) => (p.$plain ? "none" : `1px solid ${p.$bc || "#808080"}`)};
  border-left: ${(p) => (p.$noLeft ? "none" : "")};
`;
const VectorRow = styled.div`
  display: flex;
  align-items: center;
  padding: 4px 10px 0 9px;
  font-size: 12px;
`;
const VectorBtns = styled.div`
  margin-left: auto;
  display: flex;
  align-items: center;
  gap: 2px;
`;
const Split = styled.div`
  display: flex;
`;
const FormList = styled.div`
  display: flex;
  flex-direction: column;
  gap: 3px;
  padding: 4px 10px 0 9px;
`;
const FormRow = styled.div`
  display: flex;
  align-items: center;
  justify-content: space-between;
  font-size: 12px;
`;
const Field = styled.div`
  width: 140px;
  height: 25px;
  background: #fff;
  border: 1px solid #757575;
  display: flex;
  align-items: center;
  padding: 0 5px;
  gap: 6px;
  font-size: 12px;
`;
const Unit = styled.span`
  margin-left: auto;
  margin-right: 14px;
  font-size: 12px;
`;
const PushRight = styled.span`
  margin-left: auto;
  line-height: 0;
`;
const CheckRow = styled.label`
  display: flex;
  align-items: center;
  gap: 5px;
  margin-top: 2px;
  font-size: 12px;
`;
const Box = styled.span`
  width: 13px;
  height: 13px;
  border-radius: 3px;
  border: 1px solid #777;
  background: ${(p) => (p.$on ? "#0f62b8" : "#fff")};
  display: inline-flex;
  align-items: center;
  justify-content: center;
  flex-shrink: 0;
`;
const Foot = styled.div`
  padding: 5px 9px 0;
  display: flex;
  flex-direction: column;
`;
const FootRow = styled.div`
  display: flex;
  align-items: center;
  font-size: 12px;
  gap: 5px;
  height: 23px;
  margin-right: -1px;
`;
const FootUp = styled.div`
  display: flex;
  justify-content: center;
  line-height: 0;
  height: 18px;
  align-items: center;
  margin: 0 -4px 0 -4px;
  padding-top: 5px;
  border-bottom: 1px solid #bdbdbd;
  padding-bottom: 0;
`;
const UpTri = styled.i`
  width: 0;
  height: 0;
  border-left: 5px solid transparent;
  border-right: 5px solid transparent;
  border-bottom: 5px solid #222;
`;
const Btns = styled.div`
  display: flex;
  justify-content: flex-end;
  gap: 5px;
  margin-top: 8px;
  margin-right: 6px;
`;
const DlgBtn = styled.button`
  width: 54px;
  height: 25px;
  padding: 0;
  font: 12px ${FONT};
  color: ${(p) => (p.$primary ? "#fff" : BLUE)};
  background: ${(p) => (p.$primary ? BLUE : "transparent")};
  border: 1px solid ${BLUE};
`;

// ---------- navigator ----------
const Nav = styled.aside`
  width: 398px;
  display: flex;
  flex-direction: column;
  background: #f0f0f0;
`;
const NavTitle = styled.div`
  height: 29px;
  display: flex;
  align-items: center;
  gap: 11px;
  padding-left: 11px;
  font-size: 12px;
`;
const Table = styled.div`
  margin-left: 9px;
  width: 383px;
  height: 623px;
  border: 1px solid #bdbdbd;
  overflow: hidden;
  background: #fff;
`;
const Handle = styled.div`
  margin-left: 9px;
  width: 383px;
  height: 6px;
  background: #b0b0b0;
`;
const TRow = styled.div`
  display: grid;
  grid-template-columns: 200px 24px 24px 100px 1fr;
  height: ${(p) => p.$h || 20}px;
  padding-left: 1px;
  background: ${(p) => (p.$head ? "#f0f0f0" : p.$odd ? "#f5f5f5" : "#fbfbfb")};
  border-bottom: 1px solid ${(p) => (p.$head ? "#d8d8d8" : "#e8e8e8")};
  font-size: 12px;
  line-height: 19px;
`;
const TCell = styled.div`
  border-right: 1px solid #e2e2e2;
  display: flex;
  align-items: center;
  justify-content: ${(p) => (p.$c ? "center" : "flex-start")};
  padding-left: ${(p) => p.$pl || 0}px;
  padding-top: 1px;
  gap: ${(p) => p.$gap || 0}px;
  white-space: nowrap;
  overflow: hidden;
  position: relative;
  min-width: 0;
`;
const SortTri = styled.i`
  width: 0;
  height: 0;
  margin-left: 17px;
  border-left: 4.5px solid transparent;
  border-right: 4.5px solid transparent;
  border-bottom: 5px solid #222;
`;
const VDots = styled.i`
  position: absolute;
  left: ${(p) => p.$x}px;
  top: ${(p) => (p.$from === "mid" ? "50%" : "0")};
  bottom: ${(p) => (p.$to === "mid" ? "50%" : "0")};
  border-left: 1px dotted #777;
`;
const HDots = styled.i`
  position: absolute;
  left: ${(p) => p.$x}px;
  width: ${(p) => p.$w}px;
  top: 50%;
  border-top: 1px dotted #777;
`;
const Expander = styled.span`
  position: absolute;
  left: 4px;
  top: 4px;
  width: 10px;
  height: 10px;
  background: #fff;
  border: 1px solid #888;
  font: 10px/8px "Liberation Mono", monospace;
  text-align: center;
  color: #222;
`;
const IconGap = styled.span`
  margin-left: ${(p) => p.$ml || 0}px;
  line-height: 0;
`;
const TreeText = styled.span`
  margin-left: ${(p) => p.$ml || 3}px;
  font-size: 12px;
`;
const SearchBox = styled.div`
  margin-left: 9px;
  width: 383px;
  height: 95px;
  border: 1px solid #bdbdbd;
  border-top: none;
  padding: 0 0 0 6px;
  display: flex;
  flex-direction: column;
`;
const SearchHead = styled.div`
  height: 27px;
  display: flex;
  align-items: center;
  gap: 8px;
  padding-left: 1px;
  color: ${BLUE};
  font-size: 12.5px;
`;
const SearchLine = styled.div`
  display: flex;
  align-items: center;
  height: 24px;
  gap: ${(p) => p.$gap || 4}px;
  margin-bottom: 1px;
`;
const SearchInput = styled.div`
  width: 259px;
  height: 23px;
  flex-shrink: 0;
  background: #fff;
  border: 1px solid #777;
`;
const Collapsed = styled.div`
  margin-left: 9px;
  width: 383px;
  height: 24px;
  display: flex;
  align-items: center;
  gap: 11px;
  padding-left: 10px;
  color: ${BLUE};
  font-size: 12.5px;
  border-bottom: 2px solid #d0d0d0;
`;
const CollapsedWrap = styled.div`
  padding-top: ${(p) => p.$pt || 0}px;
`;

// ---------- right rail ----------
const Rail = styled.div`
  flex: 1;
  background: #b9b9b9;
  display: flex;
  flex-direction: column;
  padding-top: 2px;
`;
const RailItem = styled.div`
  width: 30px;
  height: ${(p) => p.$h}px;
  margin-top: ${(p) => p.$mt || 0}px;
  display: flex;
  align-items: center;
  justify-content: center;
  background: ${(p) => (p.$on ? "#fff" : "transparent")};
`;

// ---------- annotations ----------
const Notes = styled.div`
  position: absolute;
  left: 990px;
  top: 824px;
  font: 31.7px/40px "Noto Sans CJK SC", sans-serif;
  color: #ff1f1f;
  white-space: nowrap;
  z-index: 6;
  text-shadow: 1px 0 0 rgba(255, 120, 200, 0.3);
`;
const Arrows = styled.svg`
  position: absolute;
  left: 0;
  top: 0;
  z-index: 5;
  pointer-events: none;
`;
const Mark = styled.div`
  position: absolute;
  right: 3px;
  bottom: 2px;
  font: 14px/16px "DejaVu Serif", "Noto Sans CJK SC", serif;
  color: #6a6a6a;
  letter-spacing: 0.8px;
  z-index: 7;
  text-shadow: 0 1px 0 #fff;
  white-space: nowrap;
`;

const Tick = ({ s = 16 }) => (
  <Svg width={s} height={s} viewBox="0 0 16 16">
    <path d="M1.5 8.5 6 14 15 2.5" fill="none" stroke="#2fd24a" strokeWidth="2" />
  </Svg>
);
const MiniTick = () => (
  <Svg width={9} height={9} viewBox="0 0 10 10">
    <path d="M1.5 5.5 4 8 8.5 2.5" fill="none" stroke="#cfe3f7" strokeWidth="1.2" />
  </Svg>
);

// ---------- ribbon pieces ----------
const LT = ({ n, label, w, caret, s = 32, ml }) => (
  <LargeTool $w={w} $ml={ml}>
    <Icon n={n} s={s} />
    <LargeLabel>{label}</LargeLabel>
    {caret && (
      <ToolCaret>
        <Caret />
      </ToolCaret>
    )}
  </LargeTool>
);
const ST = ({ n, label }) => (
  <SmallTool>
    <Icon n={n} s={24} />
    {label}
  </SmallTool>
);
const GL = ({ children, caret = true }) => (
  <GroupLabel>
    {children}
    {caret && (
      <GroupCaret>
        <Caret />
      </GroupCaret>
    )}
  </GroupLabel>
);
const IC = ({ n, s = 20, w }) => (
  <Cell $w={w}>
    <Icon n={n} s={s} />
  </Cell>
);
const Dim = ({ sub, sub2, c, c2 }) => (
  <Cell>
    <DimText $c={c}>
      1.00
      <DimSub $c={c2}>{sub}</DimSub>
      {sub2 && <DimSub $c={c2}>{sub2}</DimSub>}
    </DimText>
  </Cell>
);
const Fit = ({ a, b }) => (
  <Cell>
    <DimText $c="#1c2fd0">
      {a}
      {b && <DimSub $c="#1c2fd0">{b}</DimSub>}
    </DimText>
  </Cell>
);

const RibbonBar = () => (
  <Ribbon>
    <Group $w={108}>
      <GroupBody $pl={7}>
        <LT n="plane" label="基准平面" w={56} caret />
        <LT n="sketch" label="草图" w={36} />
      </GroupBody>
      <GL>构造</GL>
    </Group>
    <Group $w={529}>
      <GroupBody $pl={9}>
        <LT n="extrude" label="拉伸" />
        <LT n="revolve" label="旋转" />
        <LT n="hole" label="孔" w={40} />
        <LT n="unite" label="合并" w={40} />
        <LT n="subtract" label="减去" />
        <LT n="trim" label="修剪体" w={43} caret />
        <LT n="blend" label="边倒圆" caret />
        <LT n="chamfer" label="倒斜角" />
        <SmallCol $w={60} $ml={7}>
          <ST n="draft" label="拔模" />
          <ST n="shell" label="抽壳" />
        </SmallCol>
        <SmallCol $w={80}>
          <ST n="pattern" label="阵列特征" />
          <ST n="mirror" label="镜像特征" />
        </SmallCol>
        <LT n="more" label="更多" caret />
      </GroupBody>
      <GL>基本</GL>
    </Group>
    <Group $w={283}>
      <GroupBody $pl={7}>
        <LT n="move" label="移动" />
        <LT n="del" label="删除" />
        <LT n="replace" label="替换" />
        <SmallCol $w={100} $ml={7}>
          <ST n="offset" label="偏置" />
          <ST n="resize" label="调整圆角大小" />
        </SmallCol>
        <LT n="refresh" label="更多" caret ml={4} />
      </GroupBody>
      <GL>同步建模</GL>
    </Group>
    <Group $w={61}>
      <GroupBody $pt={5}>
        <LargeTool $w={60}>
          <Icon n="removeParam" s={36} />
          <LargeLabel $mt={6}>移除参数</LargeLabel>
        </LargeTool>
      </GroupBody>
    </Group>
    <Group $w={51}>
      <GroupBody $col $pl={4} $pt={5} $gap={7}>
        <IconRow>
          <IC n="pen1" />
          <IC n="inkwell" />
        </IconRow>
        <IconRow>
          <IC n="hand" />
        </IconRow>
      </GroupBody>
      <GL>齿轮...</GL>
    </Group>
    <Group $w={58}>
      <GroupBody $col $pl={5} $pt={5} $gap={7}>
        <IconRow>
          <IC n="coil" />
          <IC n="spring" />
        </IconRow>
        <IconRow>
          <IC n="washer" />
          <RowSep $m={3} />
          <IC n="scissor" w={22} />
        </IconRow>
      </GroupBody>
      <GL>弹簧...</GL>
    </Group>
    <Group $w={52}>
      <GroupBody $col $pl={4} $pt={5} $gap={7}>
        <IconRow>
          <IC n="checkTool" />
          <IC n="listTool" />
        </IconRow>
        <IconRow>
          <IC n="gridTool" />
          <IC n="csys" />
        </IconRow>
      </GroupBody>
      <GL>加工...</GL>
    </Group>
    <Group $w={110}>
      <GroupBody $col $pl={5} $pt={5} $gap={7}>
        <IconRow>
          <IC n="tri" s={18} />
          <IC n="calRed" />
          <IC n="folderRed" />
          <IC n="folderChain" />
        </IconRow>
        <IconRow>
          <IC n="note" s={18} />
          <IC n="brushDim" />
          <RowSep $m={2} />
          <Cell $w={27}>
            <DimText $c="#a01818">
              <Icon n="binoc" s={12} />
              10H7
            </DimText>
          </Cell>
          <RowSep $m={2} />
          <IC n="boxPlus" />
        </IconRow>
      </GroupBody>
      <GL>建模工具 - GC工...</GL>
    </Group>
    <Group $w={30}>
      <GroupBody $col $pl={4} $pt={5} $gap={7}>
        <IconRow>
          <IC n="goldBoxes" />
        </IconRow>
        <IconRow>
          <IC n="goldBoxes" />
        </IconRow>
      </GroupBody>
      <GL>P..</GL>
    </Group>
    <Group $w={287}>
      <GroupBody $col $pl={3} $pt={5} $gap={7}>
        <IconRow>
          <IC n="bracket" />
          <RowSep $m={3.5} />
          <Cell>
            <XBox>X</XBox>
          </Cell>
          <Dim sub="±.05" />
          <Dim sub="+.02" sub2="-.02" c2="#c8231d" />
          <Dim sub="+.02" sub2="-.00" c2="#c8231d" />
          <Dim sub="+.00" sub2="-.02" c2="#c8231d" />
          <Cell>
            <XBox $box $w={16}>
              X
            </XBox>
          </Cell>
          <Cell>
            <XBox $paren $w={16}>
              X
            </XBox>
          </Cell>
          <Fit a="10H7" />
          <Fit a="10H7" b="[8.01]" />
          <Fit a="10H7" b="[8.015]" />
          <Fit a="10" b="[8.015]" />
        </IconRow>
        <IconRow>
          <IC n="pinRed" />
          <IC n="slantRed" />
          <RowSep $m={2} />
          <IC n="dia1" />
          <IC n="dia2" />
          <IC n="rotate" />
        </IconRow>
      </GroupBody>
      <GL>尺寸快速格式化工具 - GC工具箱</GL>
    </Group>
    <Group $w={104}>
      <GroupBody $col $pl={5} $pt={5} $gap={7}>
        <IconRow>
          <IC n="bezier" />
          <IC n="layers" />
          <IC n="layersGear" />
          <RowSep $m={2} />
          <IC n="tag" />
        </IconRow>
        <IconRow>
          <IC n="okGray" />
          <IC n="okColor" />
          <IC n="okBox" />
          <RowSep $m={2} />
          <IC n="docArrow" />
        </IconRow>
      </GroupBody>
      <GL>标准化工具 - G...</GL>
    </Group>
    <FarCaret>
      <Caret />
    </FarCaret>
  </Ribbon>
);

const BAR_A = ["target", "target", "target"];
const BAR_B = ["lineDim", "lineDim", "triDim", "circDim", "curveDim", "arcDim", "tagDim"];
const BAR_C = ["wrench", "extWire", "addOrange", "lineCyan", "skWrench", "cylGray", "hole", "revWire", "swap", "blend"];
const BAR_D = ["wrenchCube", "ruler", "sun", "rock"];
const BAR_MENUS = [
  ["文件(F)", 56],
  ["编辑(E)", 57],
  ["视图(V)", 57],
  ["插入(S)", 56],
  ["格式(R)", 56],
  ["工具(T)", 58],
  ["装配(A)", 56],
  ["PMI", 42],
  ["信息(I)", 52],
  ["分析(L)", 56],
];

const SelectBar = () => (
  <ToolBar>
    <Burger />
    <BarText $ml={9}>菜单(M)</BarText>
    <Caret $ml={5} />
    <BarSelect $w={148} $ml={21}>
      无选择过滤器
      <Caret $s={4} />
    </BarSelect>
    <BarBtn $ml={6}>
      <Icon n="filterDim" s={18} />
    </BarBtn>
    <BarSelect $w={155} $ml={3}>
      整个装配
      <Caret $s={4} />
    </BarSelect>
    <BarBtn $on $w={23} $ml={7}>
      <Icon n="partDim" s={16} />
    </BarBtn>
    <BarBtn $w={23}>
      <Icon n="link" s={18} />
    </BarBtn>
    <BarSep $m={6} />
    {BAR_A.map((n, i) => (
      <BarBtn key={i} $on={i === 0} $w={i === 0 ? 23 : 24}>
        <Icon n={n} s={17} />
      </BarBtn>
    ))}
    <BarBtn $on $w={23} $ml={3}>
      <Icon n="cross" s={17} />
    </BarBtn>
    {BAR_B.map((n, i) => (
      <BarBtn key={i} $w={24.7}>
        <Icon n={n} s={18} />
      </BarBtn>
    ))}
    <BarSep $m={5} />
    {BAR_C.map((n, i) => (
      <BarBtn key={i} $w={24.6}>
        <Icon n={n} s={18} />
      </BarBtn>
    ))}
    <BarSep $m={6} />
    {BAR_D.map((n, i) => (
      <BarBtn key={i} $w={24.6}>
        <Icon n={n} s={18} />
      </BarBtn>
    ))}
    <BarMenu $ml={8} $w={56}>
      {BAR_MENUS[0][0]}
      <Caret $ml={5} />
    </BarMenu>
    {BAR_MENUS.slice(1).map(([t, w]) => (
      <BarMenu key={t} $w={w}>
        {t}
        <Caret $ml={5} />
      </BarMenu>
    ))}
    <BarSep $m={6} />
    <FarCaret>
      <Caret />
    </FarCaret>
  </ToolBar>
);

// ---------- 3d model ----------
const E = "#9c9c9c";
const Y = "#55553e";

const ModelView = () => (
  <Stage width="1490" height="805" viewBox="0 202 1490 805">
    <defs>
      <linearGradient id="cylG" x1="0" y1="0" x2="0" y2="1">
        <stop offset="0" stopColor="#ececec" />
        <stop offset=".5" stopColor="#e6e6e6" />
        <stop offset="1" stopColor="#d2d2d2" />
      </linearGradient>
      <linearGradient id="pockG" x1="0" y1="0" x2="1" y2="1">
        <stop offset="0" stopColor="#e9e9e9" />
        <stop offset="1" stopColor="#c9c9c9" />
      </linearGradient>
      <linearGradient id="holeG" x1="0" y1="0" x2="0" y2="1">
        <stop offset="0" stopColor="#b6b27a" />
        <stop offset=".5" stopColor="#f3f2a8" />
        <stop offset="1" stopColor="#fdfb8d" />
      </linearGradient>
      <linearGradient id="knobG" x1="0" y1="0" x2="0" y2="1">
        <stop offset="0" stopColor="#7a9e2a" />
        <stop offset=".6" stopColor="#6f8f27" />
        <stop offset="1" stopColor="#3f4d12" />
      </linearGradient>
    </defs>

    {/* back plate */}
    <path
      d="M575 203H790L879 289 1069 285H1089L1117 300H1145L1049 1006H644L725 367 585 354 560 335 541 273 552 232Z"
      fill="#e9e9e9"
      stroke={E}
    />
    <path d="M1103 303 1016 1006" fill="none" stroke={E} />
    <path d="M1089 285Q1100 290 1103 303" fill="none" stroke={E} />
    {/* cylinders */}
    <path d="M575 203C552 225 541 250 541 273 544 310 564 345 585 354H650L690 345 770 350 800 325 809 278 800 225 790 203Z" fill="url(#cylG)" stroke={E} />
    <path d="M605 203C604 230 604 250 606 290 612 325 630 350 650 353 668 350 684 335 690 318" fill="none" stroke={E} />
    <path d="M660 203C658 235 656 260 658 282 665 310 672 330 686 341" fill="none" stroke={E} />
    <path d="M730 203C722 235 718 260 722 295 730 325 745 345 764 349 782 347 795 330 801 310 808 290 809 260 802 230L790 203" fill="#e9e9e9" stroke={E} />
    <ellipse cx="649" cy="275" rx="9.5" ry="17" fill="#dedede" stroke={E} />
    <ellipse cx="764" cy="273" rx="10" ry="17" fill="#dedede" stroke={E} />
    {/* rib */}
    <path d="M583 354 911 368" stroke={E} fill="none" />
    <path d="M725 367 909 370 600 356Z" fill="#dedede" stroke={E} strokeWidth=".7" />
    {/* pockets */}
    <path d="M761 372 756 463Q757 475 769 480L810 499H864Q875 495 879 480L885 370" fill="none" stroke={E} />
    <path d="M756 463Q757 475 769 480L810 499H864Q875 495 879 480L835 463Q830 478 820 478H769Z" fill="url(#pockG)" stroke={E} />
    <path d="M822 363 816 414M846 365 835 463" fill="none" stroke={E} />
    <path d="M769 372Q783 380 788 415L816 414 815 390Q812 375 796 372Z" fill="url(#pockG)" stroke={E} />
    <path d="M885 368Q899 380 901 412L931 411 930 392Q926 372 909 368Z" fill="url(#pockG)" stroke={E} />
    <path d="M945 306 966 317Q971 322 970 335L949 458 931 411M945 306 930 392" fill="none" stroke={E} />
    <path d="M871 463 879 370M871 463Q873 475 890 480L925 496 976 495Q990 490 992 477L949 458Q944 478 930 478H890Z" fill="url(#pockG)" stroke={E} />
    <path d="M1002 325 1010 333 992 477M945 306 1002 325" fill="none" stroke={E} />
    <path d="M915 316 945 306 960 313 938 323Z" fill="#dedede" stroke={E} strokeWidth=".7" />
    {/* sketch plane */}
    <path d="M889 293 981 333 895 1006H798Z" fill="#c6d8d8" fillOpacity=".65" stroke="#8fbdbd" strokeWidth="1.6" />

    {/* yellow part */}
    <path d="M931 838Q935 848 945 851H990L1003 838Z" fill="#e9e99c" stroke={Y} strokeWidth=".5" />
    <path d="M527 707 560 706 755 852 719 853Z" fill="#cdcd8c" stroke={Y} strokeWidth=".7" />
    <path d="M719 853 755 852 783 845 796 737 790 730 755 850 730 858Z" fill="#e9e99c" stroke={Y} strokeWidth=".5" />
    <path d="M546 553H581L560 706H527Z" fill="#fdfb8d" stroke={Y} strokeWidth=".8" />
    <path d="M581 553 798 580 785 700H750L790 735 755 852 560 706Z" fill="#fdfb8d" stroke={Y} strokeWidth=".8" />
    <path d="M763 577 755 850" fill="none" stroke={Y} strokeWidth=".7" />
    <path d="M1037 590Q1035 578 1021 573L1030 577 982 845 990 847 1010 830Z" fill="#e9e99c" stroke={Y} strokeWidth=".6" />
    <path d="M798 573 1014 573Q1028 575 1030 590L990 845 982 845 785 700Z" fill="#f0f27f" fillOpacity=".88" stroke={Y} strokeWidth=".8" />
    <path d="M750 700H785L982 845 985 850H943Z" fill="#cdcd8c" fillOpacity=".95" stroke={Y} strokeWidth=".7" />
    <path d="M767 701 960 846M775 580 767 701" fill="none" stroke="#7f8bdc" strokeWidth="1" />
    <path d="M858 545 835 780M956 573 925 800" fill="none" stroke="#8fbdbd" strokeOpacity=".7" />
    <path d="M871 587 990 643Q992 650 990 660L972 753 949 744 857 700 871 587Z" fill="none" stroke={Y} strokeWidth=".7" />
    <path d="M871 587H863L844 700Q848 712 857 712L960 755 972 753" fill="none" stroke={Y} strokeWidth=".6" />
    <path d="M838 585 958 637 943 758 822 707Z" fill="none" stroke="#b9b97c" strokeWidth="1.4" />
    <path d="M980 578 1020 595 994 830 949 825Z" fill="none" stroke="#a9cf7a" strokeWidth="1.2" />
    <ellipse cx="870" cy="663" rx="16" ry="28" fill="none" stroke="#b9b97c" />
    <path d="M862 663H878M870 655V671M982 624H996M990 617V632M961 795H975M968 788V803" stroke="#b9b97c" fill="none" />
    {/* holes */}
    <ellipse cx="663" cy="668" rx="16" ry="28" fill="url(#holeG)" stroke={Y} strokeWidth=".8" />
    {[[559, 582], [547, 677], [771, 672]].map(([x, y]) => (
      <g key={x}>
        <ellipse cx={x} cy={y} rx="8.5" ry="10" fill="url(#holeG)" stroke="#3aa57c" />
        <path d={`M${x + 11} ${y + 3}q-4 -8 0 -12`} fill="none" stroke="#a8e05a" strokeDasharray="6 4" />
        <path d={`M${x + 18} ${y - 10}q8 8 0 18q-5 6 -10 4`} fill="none" stroke="#a8e05a" strokeWidth="1" strokeDasharray="7 8" />
      </g>
    ))}
    <path d="M771 660V690M762 672H782" stroke="#7f8bdc" strokeWidth="1" />
    {/* selected face */}
    <ellipse cx="927" cy="662" rx="16" ry="28" fill="#6f9a27" stroke="#333" strokeWidth=".8" />
    <path d="M904 634H927V690H904Z" fill="url(#knobG)" />
    <ellipse cx="904" cy="662" rx="17" ry="28" fill="url(#knobG)" stroke="#ff9a3c" strokeWidth="2.2" />
    <circle cx="904" cy="662" r="4" fill="#b09a70" stroke="#555" strokeWidth=".4" />
    <path d="M908 662H930" stroke="#1c7fd8" strokeWidth="2" />
    <path d="M926 657 941 662 926 667Z" fill="#1aa2ea" />

    {/* work csys */}
    <g fill="none" stroke="#1414e6" strokeWidth="1.2">
      <path d="M891 207 929 223H984L976 287H1030M891 207 883 272H941L976 287M929 223 933 202M929 223 921 287M846 257 921 288" />
    </g>
    <path d="M846 257 857 256 853 263Z" fill="#0a0ad0" />
    <circle cx="854" cy="260" r="3.5" fill="#0a0ad0" />
    <path d="M1022 283 1034 286 1022 289Z" fill="#0a0ad0" />
    <circle cx="1019" cy="286" r="3.5" fill="#0a0ad0" />
    <path d="M921 287 924 262 928 237 929 262Z" fill="#2e9a34" />
    <path d="M889 275 905 278 919 288 900 284Z" fill="#1a4fd8" />
    <path d="M929 286H953L956 284 964 288 956 291 953 290H929Z" fill="#a82a2a" />
    <path d="M921 278V298M912 288H930" stroke="#7f7fe6" strokeWidth="1" />
    <text x="838" y="260" fontSize="14" fill="#0a0ad0" fontFamily="Liberation Sans">Z</text>
    <text x="1031" y="291" fontSize="12" fill="#0a0ad0" fontFamily="Liberation Sans">X</text>
    <text x="905" y="233" fontSize="13" fill="#2e9a34" fontFamily="Liberation Sans">YC</text>
    <text x="889" y="273" fontSize="13" fill="#1c6fd8" fontFamily="Liberation Sans">ZC</text>
    <text x="952" y="285" fontSize="13" fill="#d82a2a" fontFamily="Liberation Sans">XC</text>

    {/* view triad */}
    <path d="M81 873H114L138 883 134 923 99 925 75 915ZM114 873 110 914H75M110 914 134 923" fill="#fff" stroke="#bcbcbc" strokeWidth="1.1" />
    <path d="M108 873 111 850 110 846 114 829 119 846 116 848 113 873Z" fill="#2e9a34" />
    <path d="M96 893 94 898 78 890 65 881 83 882 96 893Z" fill="#0a2fe0" />
    <path d="M123 895H146L152 893 167 897 152 902 146 900H123Z" fill="#b32a2a" />
    <text x="114" y="824" fontSize="10" fill="#2e9a34" fontFamily="Liberation Sans">Y</text>
    <text x="56" y="884" fontSize="11" fill="#1c4fe8" fontFamily="Liberation Sans">Z</text>
    <text x="171" y="902" fontSize="11" fill="#d02a2a" fontFamily="Liberation Sans">X</text>
  </Stage>
);

const FloatBars = () => (
  <>
    <SelBar>
      <MiniField $w={154} $h={21}>
        单条曲线
        <Caret $s={4} />
      </MiniField>
      <IconGap $ml={11}>
        <Icon n="selCross" s={24} />
      </IconGap>
      <BarText $ml={12}>···</BarText>
      <RowSep $m={9} />
      <Caret $ml={3} />
    </SelBar>
    <MiniInput>
      <Grip />
      <MiniField $w={45} $h={25}>
        <Icon n="value" s={14} />
        <Caret $s={4} />
      </MiniField>
      <BarText $ml={4}>终止</BarText>
      <IconGap $ml={3} />
      <MiniField $w={61} $h={23}>
        8
        <Caret $s={4} />
      </MiniField>
    </MiniInput>
  </>
);

const ExtrudeDialog = () => (
  <Dialog>
    <DlgHead>
      <Icon n="gearW" s={14} />
      拉伸
      <DlgTools>
        <span>↺</span>
        <span>?</span>
        <span>✕</span>
      </DlgTools>
    </DlgHead>
    <DlgBody>
      <Sect $h={71}>
        <SectHead $open>
          <OpenTri />
          截面
        </SectHead>
        <SelectRow>
          <YellowBar>
            <Tick />
            选择曲线 (1)
          </YellowBar>
          <Square>
            <Icon n="sketchPen" s={20} />
          </Square>
          <Square $w={32} $h={32} $plain $bg="#fedf7a">
            <Icon n="curveOrange" s={26} />
          </Square>
        </SelectRow>
      </Sect>
      <Sect $h={71}>
        <SectHead $open>
          <OpenTri />
          方向
        </SectHead>
        <VectorRow>
          <Tick />
          <BarText $ml={5}>指定矢量</BarText>
          <VectorBtns>
            <Square>
              <Icon n="crossArrows" s={20} />
            </Square>
            <Square>
              <Icon n="dotArrow" s={20} />
            </Square>
            <Split>
              <Square $w={31} $h={32}>
                <Icon n="vector" s={26} />
              </Square>
              <Square $w={17} $h={32} $noLeft>
                <Caret />
              </Square>
            </Split>
          </VectorBtns>
        </VectorRow>
      </Sect>
      <Sect $h={170}>
        <SectHead $open>
          <OpenTri />
          限制
        </SectHead>
        <FormList>
          <FormRow>
            起始
            <Field>
              <Icon n="value" s={13} />
              值
              <PushRight>
                <Caret $s={4} />
              </PushRight>
            </Field>
          </FormRow>
          <FormRow>
            距离
            <Field>
              0<Unit>mm</Unit>
              <Caret $s={4} />
            </Field>
          </FormRow>
          <FormRow>
            终止
            <Field>
              <Icon n="value" s={13} />
              值
              <PushRight>
                <Caret $s={4} />
              </PushRight>
            </Field>
          </FormRow>
          <FormRow>
            距离
            <Field>
              8<Unit>mm</Unit>
              <Caret $s={4} />
            </Field>
          </FormRow>
          <CheckRow>
            <Box />
            开放轮廓智能体
          </CheckRow>
        </FormList>
      </Sect>
      <Sect $h={65}>
        <SectHead $open>
          <OpenTri />
          布尔
        </SectHead>
        <FormList>
          <FormRow>
            布尔（无）
            <Field>
              <Icon n="bolt" s={17} />
              自动判断
              <PushRight>
                <Caret $s={4} />
              </PushRight>
            </Field>
          </FormRow>
        </FormList>
      </Sect>
      {["拔模", "偏置", "设置"].map((t) => (
        <Sect key={t} $h={24}>
          <SectHead $small>
            <ClosedTri />
            {t}
          </SectHead>
        </Sect>
      ))}
    </DlgBody>
    <Foot>
      <FootRow>
        <Box $on>
          <MiniTick />
        </Box>
        预览
        <PushRight />
        显示结果
        <Square $w={24} $h={24}>
          <Icon n="search" s={20} />
        </Square>
      </FootRow>
      <FootUp>
        <UpTri />
      </FootUp>
      <Btns>
        <DlgBtn $primary>&lt; 确定 &gt;</DlgBtn>
        <DlgBtn>应用</DlgBtn>
        <DlgBtn>取消</DlgBtn>
      </Btns>
    </Foot>
  </Dialog>
);

// ---------- part navigator ----------
const FEATURES = [
  ["csys", "基准坐标系 (0)"],
  ["extrude", "拉伸 (9)"],
  ["plane", "基准平面 (10)"],
  ["sketch", '草图 (11) "SKETCH_...'],
  ["extrude", "拉伸 (12)"],
  ["extrude", "拉伸 (13)"],
  ["blend", "边倒圆 (14)"],
  ["chamfer", "倒斜角 (15)"],
  ["thread", "M6 × 1.0 螺纹孔 (16)"],
  ["mirrorGeo", "镜像几何体 (17)"],
];

const EmptyCells = ({ tick }) => (
  <>
    <TCell />
    <TCell $c>{tick && <Tick s={15} />}</TCell>
    <TCell />
    <TCell />
  </>
);

const PartNavigator = () => (
  <Nav>
    <NavTitle>
      <Icon n="winSq" s={14} />
      部件导航器
    </NavTitle>
    <Table>
      <TRow $head $h={21}>
        <TCell $pl={7}>
          名称
          <SortTri />
        </TCell>
        <TCell $c>当</TCell>
        <TCell $c>最</TCell>
        <TCell $pl={7}>附注</TCell>
        <TCell />
      </TRow>
      <TRow>
        <TCell $pl={19}>
          <VDots $x={9} $from="mid" />
          <HDots $x={9} $w={9} />
          <Icon n="clock" s={15} />
          <TreeText $ml={4}>历史记录建模模式</TreeText>
        </TCell>
        <EmptyCells />
      </TRow>
      <TRow $odd>
        <TCell $pl={19}>
          <VDots $x={9} />
          <HDots $x={9} $w={9} />
          <Expander>+</Expander>
          <Icon n="modelView" s={15} />
          <TreeText $ml={4}>模型视图（工作部件）</TreeText>
        </TCell>
        <EmptyCells />
      </TRow>
      <TRow>
        <TCell $pl={20}>
          <VDots $x={9} $to="mid" />
          <Expander>-</Expander>
          <Icon n="ball" s={14} />
          <IconGap $ml={2}>
            <Icon n="history" s={15} />
          </IconGap>
          <TreeText $ml={3}>模型历史记录</TreeText>
        </TCell>
        <EmptyCells tick />
      </TRow>
      {FEATURES.map(([icon, label], i) => (
        <TRow key={label} $odd={i % 2 === 1}>
          <TCell $pl={38}>
            <VDots $x={28} $to={i === FEATURES.length - 1 ? "mid" : undefined} />
            <HDots $x={28} $w={10} />
            <Icon n="eye" s={15} />
            <IconGap $ml={1}>
              <Icon n={icon} s={16} />
            </IconGap>
            <TreeText>{label}</TreeText>
          </TCell>
          <EmptyCells tick />
        </TRow>
      ))}
      {Array.from({ length: 17 }, (_, i) => (
        <TRow key={i} $odd={i % 2 === 0}>
          <TCell />
          <EmptyCells />
        </TRow>
      ))}
    </Table>
    <Handle />
    <SearchBox>
      <SearchHead>
        <OpenTri />
        搜索
      </SearchHead>
      <SearchLine>
        <SearchInput />
        <Square $h={23}>
          <Icon n="bigX" s={16} />
        </Square>
        <Square $h={23}>
          <Icon n="up" s={16} />
        </Square>
        <Square $h={23}>
          <Icon n="down" s={16} />
        </Square>
        <Square $h={23}>
          <Icon n="aim" s={16} />
        </Square>
      </SearchLine>
      <SearchLine $gap={2}>
        <Box $on>
          <MiniTick />
        </Box>
        <BarText $ml={3}>自动完成</BarText>
        <IconGap $ml={185} />
        <Square $h={23}>
          <Icon n="eyeDoc" s={18} />
        </Square>
        <Square $h={23}>
          <Icon n="addFilter" s={17} />
        </Square>
        <BarText>无匹配</BarText>
        <Square $h={23}>
          <Icon n="aimBr" s={18} />
        </Square>
      </SearchLine>
    </SearchBox>
    <CollapsedWrap>
      {["相关性", "细节", "预览"].map((t) => (
        <Collapsed key={t}>
          <ClosedTri />
          {t}
        </Collapsed>
      ))}
    </CollapsedWrap>
  </Nav>
);

const SideRail = () => (
  <Rail>
    <RailItem $h={22}>
      <Icon n="gear" s={15} />
    </RailItem>
    <RailItem $h={30} $mt={23}>
      <Icon n="boxes" s={24} />
    </RailItem>
    <RailItem $h={30} $mt={13}>
      <Icon n="cubeBow" s={26} />
    </RailItem>
    <RailItem $h={44} $mt={9} $on>
      <Icon n="part" s={26} />
    </RailItem>
    <RailItem $h={30} $mt={3}>
      <Icon n="books" s={24} />
    </RailItem>
    <RailItem $h={30} $mt={11}>
      <Icon n="partDim2" s={26} />
    </RailItem>
    <RailItem $h={30} $mt={15}>
      <Icon n="measure" s={26} />
    </RailItem>
    <RailItem $h={26} $mt={23}>
      <Icon n="info" s={22} />
    </RailItem>
    <RailItem $h={26} $mt={28}>
      <Icon n="railClock" s={23} />
    </RailItem>
    <RailItem $h={26} $mt={15}>
      <Icon n="colorWand" s={22} />
    </RailItem>
    <RailItem $h={26} $mt={17}>
      <Icon n="wandBlue" s={24} />
    </RailItem>
    <RailItem $h={26} $mt={15}>
      <Icon n="tools" s={24} />
    </RailItem>
  </Rail>
);

const MENUS = ["曲线", "曲面", "分析", "视图", "装配", "选择", "渲染", "工具"];

export default function App() {
  return (
    <>
      <Global />
      <Root>
        <Head>
          <TitleRow>
            <Logo>NX</Logo>
            <QuickBtn $ml={5}>
              <Icon n="save" s={20} />
            </QuickBtn>
            <QuickSep $ml={1} $mr={4} />
            <QuickBtn>
              <Icon n="undo" s={19} />
            </QuickBtn>
            <Caret $c="#fff" $ml={3} />
            <QuickBtn $ml={7}>
              <Icon n="redo" s={18} />
            </QuickBtn>
            <QuickSep $ml={1} $mr={2} />
            {["fan", "copy", "paste", "delDim"].map((n) => (
              <QuickBtn key={n} $w={23}>
                <Icon n={n} s={18} />
              </QuickBtn>
            ))}
            <QuickSep $ml={1} $mr={3} />
            <QuickBtn $w={24}>
              <Icon n="house" s={18} />
            </QuickBtn>
            <Caret $c="#fff" $ml={4} />
            <QuickSep $ml={6} $mr={1} />
            <QuickBtn $w={26}>
              <Icon n="mic" s={20} />
            </QuickBtn>
            <QuickSep $ml={1} $mr={1} />
            <QuickBtn $w={27}>
              <Icon n="touch" s={18} />
            </QuickBtn>
            <QuickSep $ml={1} $mr={2} />
            <QuickBtn $w={24}>
              <Icon n="win1" s={19} />
            </QuickBtn>
            <QuickBtn $w={23}>
              <Icon n="win2" s={19} />
            </QuickBtn>
            <WinText>窗口</WinText>
            <Caret $c="#fff" $ml={4} />
            <Caret $c="#fff" $ml={6} />
            <AppTitle>NX - 建模</AppTitle>
            <Siemens>SIEMENS</Siemens>
            <WinCtrls>
              <Svg width="16" height="16" viewBox="0 0 16 16">
                <path d="M3 14H11" stroke="#fff" strokeWidth="2" />
              </Svg>
              <Svg width="16" height="16" viewBox="0 0 16 16">
                <path d="M2 6H10V14H2ZM5 6V2H14V10H10M2 8H10" fill="none" stroke="#fff" strokeWidth="1.3" />
              </Svg>
              <Svg width="16" height="16" viewBox="0 0 16 16">
                <path d="M2 2 14 14M14 2 2 14" stroke="#fff" strokeWidth="2" />
              </Svg>
            </WinCtrls>
          </TitleRow>
          <MenuRow>
            <MenuTab $mr={17}>文件(F)</MenuTab>
            <MenuTab $on>主页</MenuTab>
            {MENUS.map((m) => (
              <MenuTab key={m}>{m}</MenuTab>
            ))}
            <MenuTab $w={90}>应用模块</MenuTab>
            <MenuRight>
              <TopSearch>
                在此输入以搜索
                <Svg width="16" height="16" viewBox="0 0 24 24">
                  <Lens x={15} y={9} r={7} c="#555" />
                </Svg>
              </TopSearch>
              <TopBtn>
                <Svg width="18" height="18" viewBox="0 0 18 18">
                  <path d="M1 5V1H5M13 1H17V5M17 13V17H13M5 17H1V13" fill="none" stroke="#fff" strokeWidth="1.2" />
                </Svg>
              </TopBtn>
              <TopBtn>
                <Svg width="18" height="18" viewBox="0 0 18 18">
                  <path d="M1 14 9 5 17 14" fill="none" stroke="#fff" strokeWidth="1.3" />
                </Svg>
              </TopBtn>
              <TopBtn>
                <Svg width="18" height="18" viewBox="0 0 18 18">
                  <circle cx="9" cy="9" r="7.5" fill="none" stroke="#fff" strokeWidth="1.1" />
                  <text x="9" y="13" fontSize="11" textAnchor="middle" fill="#fff" fontFamily="Liberation Sans">?</text>
                </Svg>
              </TopBtn>
              <TopBtn>
                <Svg width="18" height="18" viewBox="0 0 18 18">
                  <path d="M9 1V12M9 14V17" stroke="#fff" strokeWidth="2" />
                </Svg>
              </TopBtn>
            </MenuRight>
          </MenuRow>
        </Head>
        <RibbonBar />
        <SelectBar />
        <Work>
          <Left>
            <Tabs>
              <DocTab $w={96} $pl={6} $gap={3}>
                <Icon n="findCenter" s={16} />
                发现中心
              </DocTab>
              <DocTab $on $w={232} $pl={6} $gap={5}>
                <Icon n="tabPart" s={16} />
                支架.prt 在装配中 擀面总成.prt
                <Icon n="pageArrow" s={13} />
                <TabClose>×</TabClose>
              </DocTab>
            </Tabs>
            <Viewport>
              <ModelView />
              <FloatBars />
              <ExtrudeDialog />
            </Viewport>
          </Left>
          <PartNavigator />
          <SideRail />
        </Work>
        <StatusLine />
        <Notes>
          这就跳转到支架组件里面来建模了。
          <br />
          我想着是引用这个参数，
          <br />
          但是建模步骤等还要放在我新建的组件里面。
        </Notes>
        <Mark>UG爱好者论坛@小南河的涝泥</Mark>
        <Arrows width="1920" height="1012" viewBox="0 0 1920 1012">
          <path d="M1035 372 1169.5 285 1165 279 1188 280 1178 297 1174.5 293.5Z" fill="#ff2a1a" />
          <path d="M833 909 883 713 879 711 893 698 898 716 891 715Z" fill="#ff2a1a" />
          <path d="M1545 637 1604 511 1599 508 1616 496 1618 520 1612 516Z" fill="#ff2a1a" />
        </Arrows>
      </Root>
    </>
  );
}
